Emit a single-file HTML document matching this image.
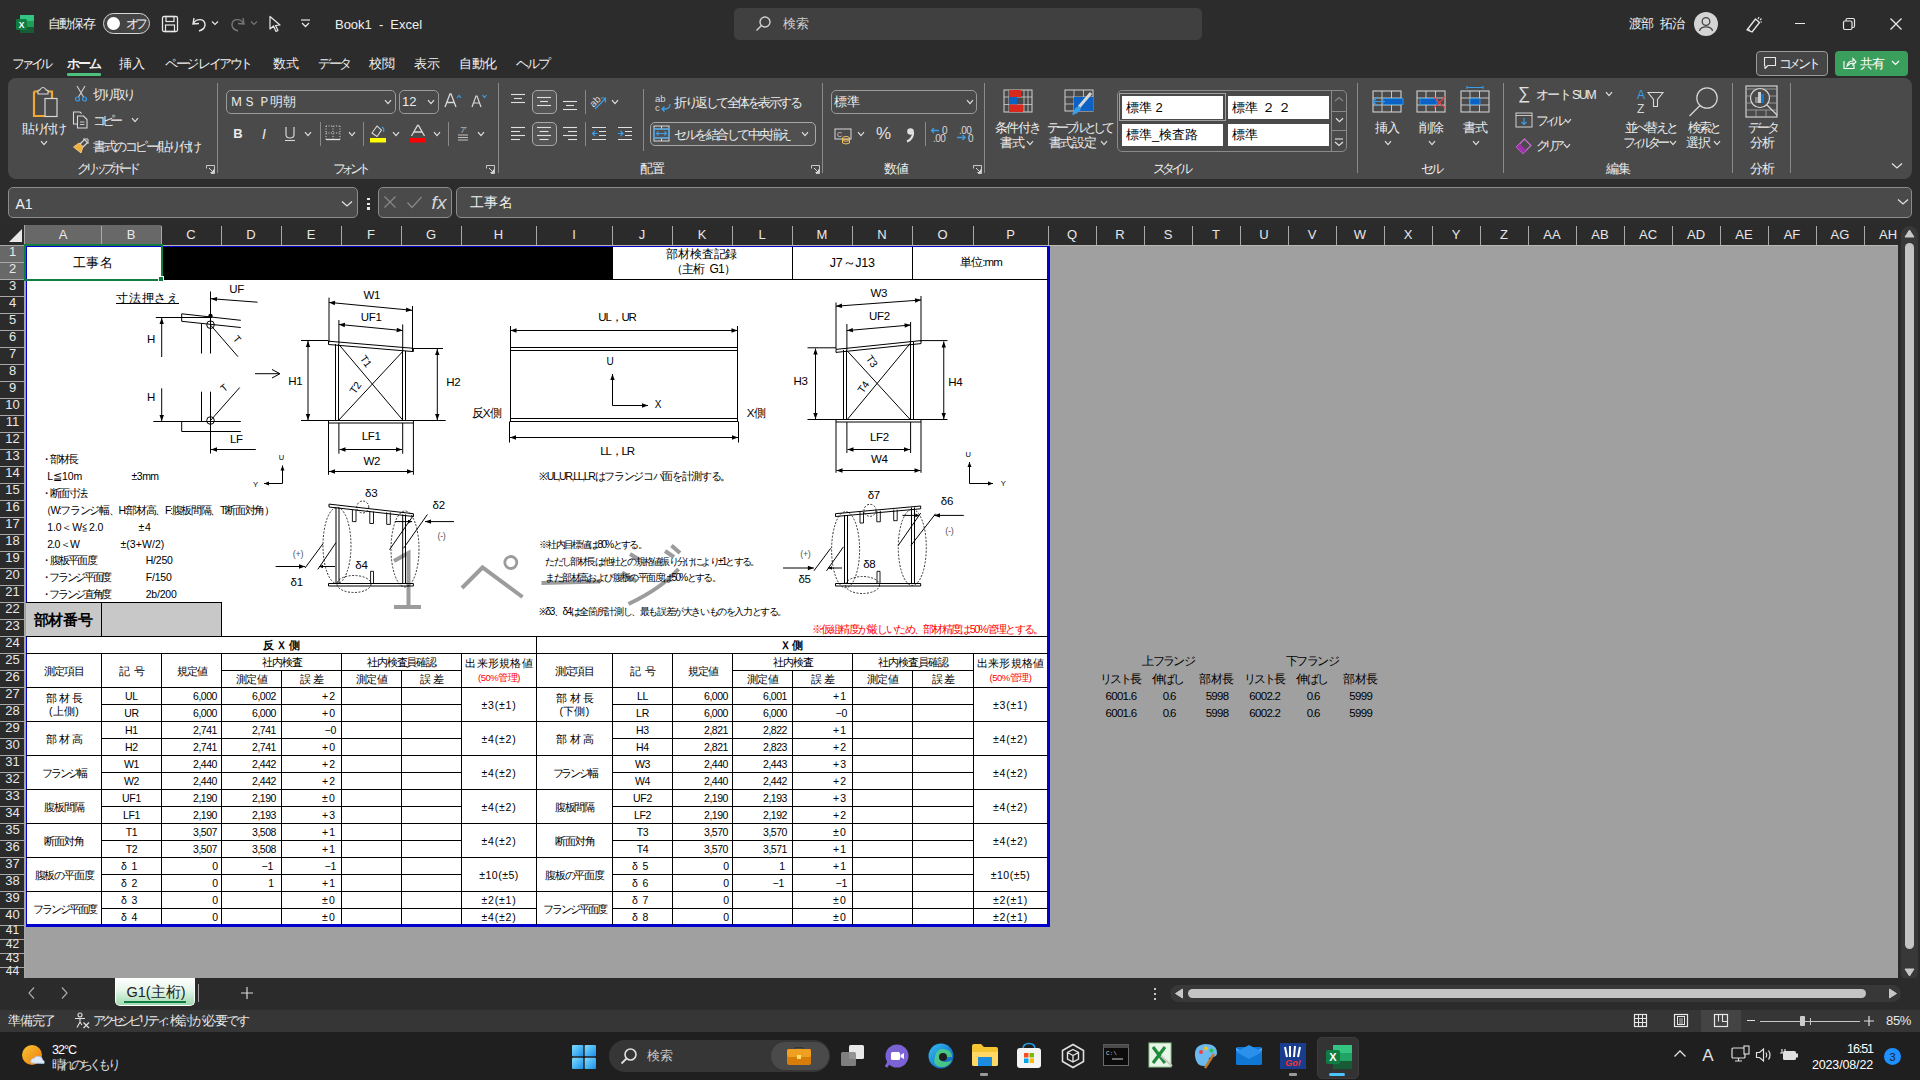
<!DOCTYPE html><html><head><meta charset="utf-8"><style>
html,body{margin:0;padding:0;width:1920px;height:1080px;overflow:hidden;background:#2c2c2c;font-family:"Liberation Sans",sans-serif;}
.t{position:absolute;white-space:nowrap;line-height:1.15;}
.r{position:absolute;box-sizing:border-box;}
.s{position:absolute;overflow:visible;}
</style></head><body>
<svg class="s" style="left:15px;top:14px;" width="20" height="20" viewBox="0 0 20 20"><rect x="5" y="1" width="14" height="18" rx="1.5" fill="#1f9d55"/><rect x="5" y="1" width="14" height="6" fill="#33c481"/><rect x="5" y="13" width="14" height="6" fill="#185c37"/><rect x="1" y="5" width="11" height="11" rx="1.5" fill="#107c41"/><text x="6.5" y="13.5" font-size="8.5" font-weight="bold" fill="#fff" text-anchor="middle" font-family="Liberation Sans">X</text></svg>
<div class="t" style="left:47.5px;top:24px;font-size:13px;color:#f0f0f0;transform:translate(0,-50%);letter-spacing:-1.125px;">自動保存</div>
<div class="r" style="left:103px;top:13px;width:47px;height:21px;background:#444444;border:1.5px solid #d8d8d8;border-radius:11px;"></div>
<div class="r" style="left:107px;top:17px;width:13px;height:13px;background:#fff;border-radius:50%;"></div>
<div class="t" style="left:126px;top:23.5px;font-size:12.5px;color:#f0f0f0;transform:translate(0,-50%);letter-spacing:-4.5px;">オフ</div>
<svg class="s" style="left:161px;top:15px;" width="18" height="18" viewBox="0 0 18 18"><rect x="1.5" y="1.5" width="15" height="15" rx="1.5" fill="none" stroke="#e8e8e8" stroke-width="1.3"/><rect x="5" y="1.5" width="8" height="5" fill="none" stroke="#e8e8e8" stroke-width="1.2"/><rect x="4.5" y="10" width="9" height="6.5" fill="none" stroke="#e8e8e8" stroke-width="1.2"/></svg>
<svg class="s" style="left:190px;top:15px;" width="18" height="18" viewBox="0 0 18 18"><path d="M4 3 L3 9 L9 8.5" fill="none" stroke="#e8e8e8" stroke-width="1.4"/><path d="M3.5 8.5 C6 3.5 14 3 15 9 C15.5 13 12 15 9 16" fill="none" stroke="#e8e8e8" stroke-width="1.4"/></svg>
<svg class="s" style="left:211px;top:20px;" width="8" height="6" viewBox="0 0 8 6"><path d="M1 1.5 L4 4.5 L7 1.5" fill="none" stroke="#e8e8e8" stroke-width="1.2"/></svg>
<svg class="s" style="left:229px;top:15px;" width="18" height="18" viewBox="0 0 18 18"><path d="M14 3 L15 9 L9 8.5" fill="none" stroke="#777" stroke-width="1.4"/><path d="M14.5 8.5 C12 3.5 4 3 3 9 C2.5 13 6 15 9 16" fill="none" stroke="#777" stroke-width="1.4"/></svg>
<svg class="s" style="left:250px;top:20px;" width="8" height="6" viewBox="0 0 8 6"><path d="M1 1.5 L4 4.5 L7 1.5" fill="none" stroke="#777" stroke-width="1.2"/></svg>
<svg class="s" style="left:268px;top:15px;" width="16" height="18" viewBox="0 0 16 18"><path d="M2 1.5 L2 14 L5.5 11 L8 16.5 L10 15.5 L7.5 10.5 L12 10 Z" fill="none" stroke="#e8e8e8" stroke-width="1.2" stroke-linejoin="round"/></svg>
<svg class="s" style="left:300px;top:19px;" width="11" height="9" viewBox="0 0 11 9"><path d="M1 1 L10 1" stroke="#e8e8e8" stroke-width="1.2"/><path d="M2 4 L5.5 7.5 L9 4" fill="none" stroke="#e8e8e8" stroke-width="1.3"/></svg>
<div class="t" style="left:335px;top:24.5px;font-size:13px;color:#f0f0f0;transform:translate(0,-50%);letter-spacing:-0.029px;">Book1&nbsp;&nbsp;-&nbsp;&nbsp;Excel</div>
<div class="r" style="left:734px;top:8px;width:468px;height:32px;background:#404040;border-radius:5px;"></div>
<svg class="s" style="left:754px;top:15px;" width="18" height="18" viewBox="0 0 18 18"><circle cx="11" cy="7" r="5" fill="none" stroke="#cfcfcf" stroke-width="1.4"/><path d="M7.5 10.5 L2.5 15.5" stroke="#cfcfcf" stroke-width="1.5"/></svg>
<div class="t" style="left:782.5px;top:24px;font-size:13px;color:#cfcfcf;transform:translate(0,-50%);letter-spacing:0.25px;">検索</div>
<div class="t" style="left:1628.5px;top:24px;font-size:13px;color:#f0f0f0;transform:translate(0,-50%);letter-spacing:-0.539px;">渡部&nbsp;&nbsp;拓治</div>
<div class="r" style="left:1694px;top:12px;width:24px;height:24px;background:#d4d4d4;border-radius:50%;"></div>
<svg class="s" style="left:1694px;top:12px;" width="24" height="24" viewBox="0 0 24 24"><circle cx="12" cy="9.5" r="3.8" fill="none" stroke="#444" stroke-width="1.3"/><path d="M5.5 19 C6.5 13.5 17.5 13.5 18.5 19" fill="none" stroke="#444" stroke-width="1.3"/></svg>
<svg class="s" style="left:1744px;top:15px;" width="20" height="18" viewBox="0 0 20 18"><path d="M3 15 L8 17 L15.5 7.5 L11.5 4 Z" fill="none" stroke="#e8e8e8" stroke-width="1.3" stroke-linejoin="round"/><path d="M4 13 L6 16" stroke="#e8e8e8" stroke-width="1.2"/><path d="M15 2 L14 4 M17.5 3.5 L16 5 M18 7 L16.5 7" stroke="#e8e8e8" stroke-width="1.1"/></svg>
<div class="r" style="left:1795px;top:23px;width:10px;height:1.2px;background:#e8e8e8;"></div>
<svg class="s" style="left:1842px;top:17px;" width="14" height="14" viewBox="0 0 14 14"><rect x="1.5" y="4" width="8.5" height="8.5" rx="1.5" fill="none" stroke="#e8e8e8" stroke-width="1.2"/><path d="M4 4 L4 3 Q4 1.5 5.5 1.5 L11 1.5 Q12.5 1.5 12.5 3 L12.5 9 Q12.5 10.5 11 10.5 L10 10.5" fill="none" stroke="#e8e8e8" stroke-width="1.2"/></svg>
<svg class="s" style="left:1889px;top:17px;" width="14" height="14" viewBox="0 0 14 14"><path d="M1.5 1.5 L12.5 12.5 M12.5 1.5 L1.5 12.5" stroke="#e8e8e8" stroke-width="1.3"/></svg>
<div class="t" style="left:12px;top:63.5px;font-size:13px;color:#f0f0f0;transform:translate(0,-50%);letter-spacing:-3.75px;">ファイル</div>
<div class="t" style="left:67px;top:63.5px;font-size:13px;color:#f0f0f0;transform:translate(0,-50%);font-weight:bold;letter-spacing:-2.0px;">ホーム</div>
<div class="t" style="left:119px;top:63.5px;font-size:13px;color:#f0f0f0;transform:translate(0,-50%);letter-spacing:0.0px;">挿入</div>
<div class="t" style="left:165px;top:63.5px;font-size:13px;color:#f0f0f0;transform:translate(0,-50%);letter-spacing:-2.403px;">ページ&nbsp;レイアウト</div>
<div class="t" style="left:273px;top:63.5px;font-size:13px;color:#f0f0f0;transform:translate(0,-50%);letter-spacing:0.0px;">数式</div>
<div class="t" style="left:318px;top:63.5px;font-size:13px;color:#f0f0f0;transform:translate(0,-50%);letter-spacing:-2.333px;">データ</div>
<div class="t" style="left:369px;top:63.5px;font-size:13px;color:#f0f0f0;transform:translate(0,-50%);letter-spacing:0.0px;">校閲</div>
<div class="t" style="left:414px;top:63.5px;font-size:13px;color:#f0f0f0;transform:translate(0,-50%);letter-spacing:0.0px;">表示</div>
<div class="t" style="left:459px;top:63.5px;font-size:13px;color:#f0f0f0;transform:translate(0,-50%);letter-spacing:-0.333px;">自動化</div>
<div class="t" style="left:516px;top:63.5px;font-size:13px;color:#f0f0f0;transform:translate(0,-50%);letter-spacing:-2.0px;">ヘルプ</div>
<div class="r" style="left:67px;top:73px;width:34px;height:2.5px;background:#4ec07e;border-radius:1px;"></div>
<div class="r" style="left:1756px;top:51px;width:72px;height:25px;background:#454545;border:1px solid #9a9a9a;border-radius:4px;"></div>
<svg class="s" style="left:1763px;top:56px;" width="14" height="14" viewBox="0 0 14 14"><path d="M1.5 1.5 L12.5 1.5 L12.5 9.5 L5 9.5 L2 12.5 L2 9.5 L1.5 9.5 Z" fill="none" stroke="#e8e8e8" stroke-width="1.1" stroke-linejoin="round"/></svg>
<div class="t" style="left:1778.5px;top:63.5px;font-size:13px;color:#f0f0f0;transform:translate(0,-50%);letter-spacing:-3.25px;">コメント</div>
<div class="r" style="left:1835px;top:51px;width:73px;height:25px;background:#3a9e5c;border-radius:4px;"></div>
<svg class="s" style="left:1842px;top:56px;" width="15" height="14" viewBox="0 0 15 14"><path d="M2 5 L2 12.5 L12 12.5 L12 9" fill="none" stroke="#fff" stroke-width="1.1"/><path d="M5 10 Q6 5 11 5 L11 2.5 L14 6 L11 9 L11 7 Q8 7 5 10Z" fill="none" stroke="#fff" stroke-width="1.1"/></svg>
<div class="t" style="left:1859.5px;top:63.5px;font-size:13px;color:#fff;transform:translate(0,-50%);letter-spacing:-0.75px;">共有</div>
<svg class="s" style="left:1891px;top:60px;" width="9" height="6" viewBox="0 0 9 6"><path d="M1 1 L4.5 4.5 L8 1" fill="none" stroke="#fff" stroke-width="1.2"/></svg>
<div class="r" style="left:8px;top:78px;width:1904px;height:101px;background:#4a4a4a;border-radius:8px;"></div>
<div class="t" style="left:106.5px;top:169px;font-size:13px;color:#ececec;transform:translate(-50%,-50%);letter-spacing:-4.571px;">クリップボード</div>
<div class="t" style="left:349.5px;top:169px;font-size:13px;color:#ececec;transform:translate(-50%,-50%);letter-spacing:-4.75px;">フォント</div>
<div class="t" style="left:652px;top:169px;font-size:13px;color:#ececec;transform:translate(-50%,-50%);letter-spacing:-1.0px;">配置</div>
<div class="t" style="left:896px;top:169px;font-size:13px;color:#ececec;transform:translate(-50%,-50%);letter-spacing:-1.0px;">数値</div>
<div class="t" style="left:1170.5px;top:169px;font-size:13px;color:#ececec;transform:translate(-50%,-50%);letter-spacing:-4.0px;">スタイル</div>
<div class="t" style="left:1431px;top:169px;font-size:13px;color:#ececec;transform:translate(-50%,-50%);letter-spacing:-3.0px;">セル</div>
<div class="t" style="left:1618px;top:169px;font-size:13px;color:#ececec;transform:translate(-50%,-50%);letter-spacing:-1.0px;">編集</div>
<div class="t" style="left:1762px;top:169px;font-size:13px;color:#ececec;transform:translate(-50%,-50%);letter-spacing:-1.0px;">分析</div>
<div class="r" style="left:217px;top:83px;width:1px;height:90px;background:#8a8a8a;"></div>
<div class="r" style="left:497.5px;top:83px;width:1px;height:90px;background:#8a8a8a;"></div>
<div class="r" style="left:822px;top:83px;width:1px;height:90px;background:#8a8a8a;"></div>
<div class="r" style="left:984px;top:83px;width:1px;height:90px;background:#8a8a8a;"></div>
<div class="r" style="left:1357px;top:83px;width:1px;height:90px;background:#8a8a8a;"></div>
<div class="r" style="left:1503px;top:83px;width:1px;height:90px;background:#8a8a8a;"></div>
<div class="r" style="left:1732px;top:83px;width:1px;height:90px;background:#8a8a8a;"></div>
<div class="r" style="left:1790px;top:83px;width:1px;height:90px;background:#8a8a8a;"></div>
<div class="r" style="left:643px;top:89px;width:1px;height:62px;background:#8a8a8a;"></div>
<svg class="s" style="left:206px;top:164.5px;" width="9" height="9" viewBox="0 0 9 9"><path d="M0.5 3.5 L0.5 0.5 L8.5 0.5 L8.5 8.5 L5 8.5" fill="none" stroke="#d8d8d8" stroke-width="0.9"/><path d="M3 3 L7.5 7.5 M7.5 4.5 L7.5 7.5 L4.5 7.5" fill="none" stroke="#d8d8d8" stroke-width="1"/></svg>
<svg class="s" style="left:486px;top:164.5px;" width="9" height="9" viewBox="0 0 9 9"><path d="M0.5 3.5 L0.5 0.5 L8.5 0.5 L8.5 8.5 L5 8.5" fill="none" stroke="#d8d8d8" stroke-width="0.9"/><path d="M3 3 L7.5 7.5 M7.5 4.5 L7.5 7.5 L4.5 7.5" fill="none" stroke="#d8d8d8" stroke-width="1"/></svg>
<svg class="s" style="left:811px;top:164.5px;" width="9" height="9" viewBox="0 0 9 9"><path d="M0.5 3.5 L0.5 0.5 L8.5 0.5 L8.5 8.5 L5 8.5" fill="none" stroke="#d8d8d8" stroke-width="0.9"/><path d="M3 3 L7.5 7.5 M7.5 4.5 L7.5 7.5 L4.5 7.5" fill="none" stroke="#d8d8d8" stroke-width="1"/></svg>
<svg class="s" style="left:973px;top:164.5px;" width="9" height="9" viewBox="0 0 9 9"><path d="M0.5 3.5 L0.5 0.5 L8.5 0.5 L8.5 8.5 L5 8.5" fill="none" stroke="#d8d8d8" stroke-width="0.9"/><path d="M3 3 L7.5 7.5 M7.5 4.5 L7.5 7.5 L4.5 7.5" fill="none" stroke="#d8d8d8" stroke-width="1"/></svg>
<svg class="s" style="left:1891px;top:162px;" width="12" height="8" viewBox="0 0 12 8"><path d="M1 1.5 L6 6 L11 1.5" fill="none" stroke="#e0e0e0" stroke-width="1.3"/></svg>
<svg class="s" style="left:30px;top:86px;" width="32" height="32" viewBox="0 0 32 32"><path d="M4 5.5 L4 30 L15 30" fill="none" stroke="#f0a830" stroke-width="2.2"/><path d="M4 5.5 L8 5.5 M18 5.5 L22 5.5 L22 12" fill="none" stroke="#f0a830" stroke-width="2.2"/><path d="M8 8 L8 4.5 Q10 4.5 10.5 3 Q13 0 15.5 3 Q16 4.5 18 4.5 L18 8 Z" fill="#4a4a4a" stroke="#d8d8d8" stroke-width="1.1"/><rect x="15" y="12.5" width="12" height="18" fill="#4a4a4a" stroke="#d8d8d8" stroke-width="1.2"/></svg>
<div class="t" style="left:43px;top:128.5px;font-size:12.5px;color:#ececec;transform:translate(-50%,-50%);letter-spacing:-2.5px;">貼り付け</div>
<svg class="s" style="left:40.0px;top:140px;" width="8" height="6" viewBox="0 0 8 6"><path d="M1 1.2 L4.0 4.6 L7 1.2" fill="none" stroke="#e0e0e0" stroke-width="1.2"/></svg>
<svg class="s" style="left:74px;top:85px;" width="14" height="17" viewBox="0 0 14 17"><path d="M3 1 L9.5 12 M11 1 L4.5 12" stroke="#d0d0d0" stroke-width="1.1"/><circle cx="3.5" cy="14" r="2" fill="none" stroke="#3a9ee8" stroke-width="1.2"/><circle cx="10.5" cy="14" r="2" fill="none" stroke="#3a9ee8" stroke-width="1.2"/></svg>
<div class="t" style="left:93px;top:94.5px;font-size:12.5px;color:#ececec;transform:translate(0,-50%);letter-spacing:-3.0px;">切り取り</div>
<svg class="s" style="left:72px;top:111px;" width="18" height="18" viewBox="0 0 18 18"><path d="M5 13 L1.5 13 L1.5 1 L8 1 L9.5 2.5" fill="none" stroke="#d8d8d8" stroke-width="1.1"/><path d="M5.5 5 L11.5 5 L15 8.5 L15 17 L5.5 17 Z" fill="none" stroke="#d8d8d8" stroke-width="1.1"/><path d="M8 11 L12.5 11 M8 13.5 L12.5 13.5" stroke="#d8d8d8" stroke-width="0.9"/></svg>
<div class="t" style="left:93px;top:120.5px;font-size:12.5px;color:#ececec;transform:translate(0,-50%);letter-spacing:-4.333px;">コピー</div>
<svg class="s" style="left:131.0px;top:117px;" width="8" height="6" viewBox="0 0 8 6"><path d="M1 1.2 L4.0 4.6 L7 1.2" fill="none" stroke="#e0e0e0" stroke-width="1.2"/></svg>
<svg class="s" style="left:72px;top:137px;" width="18" height="17" viewBox="0 0 18 17"><path d="M1.5 10 L9 16 L11 9.5 L7 6 Z" fill="#f0b040" stroke="#f8d890" stroke-width="0.8"/><path d="M8 7 L12.5 2.5 L15.5 5.5 L11 10" fill="none" stroke="#d8d8d8" stroke-width="1.2"/><path d="M11 2 L16 2 L16 7" fill="none" stroke="#d8d8d8" stroke-width="1"/></svg>
<div class="t" style="left:93px;top:146.5px;font-size:12.5px;color:#ececec;transform:translate(0,-50%);letter-spacing:-2.408px;">書式のコピー/貼り付け</div>
<div class="r" style="left:226px;top:90px;width:170px;height:24px;background:none;border:1px solid #9a9a9a;border-radius:5px;"></div>
<div class="t" style="left:230px;top:101.5px;font-size:12.5px;color:#ececec;transform:translate(0,-50%);letter-spacing:-0.5px;">ＭＳ&nbsp;Ｐ明朝</div>
<svg class="s" style="left:384.0px;top:99px;" width="8" height="6" viewBox="0 0 8 6"><path d="M1 1.2 L4.0 4.6 L7 1.2" fill="none" stroke="#e0e0e0" stroke-width="1.2"/></svg>
<div class="r" style="left:399px;top:90px;width:40px;height:24px;background:none;border:1px solid #9a9a9a;border-radius:5px;"></div>
<div class="t" style="left:402px;top:102px;font-size:13px;color:#ececec;transform:translate(0,-50%);">12</div>
<svg class="s" style="left:427.0px;top:99px;" width="8" height="6" viewBox="0 0 8 6"><path d="M1 1.2 L4.0 4.6 L7 1.2" fill="none" stroke="#e0e0e0" stroke-width="1.2"/></svg>
<svg class="s" style="left:444px;top:92px;" width="18" height="16" viewBox="0 0 18 16"><path d="M1 15 L6 2 L7 2 L12 15 M3 10.5 L10 10.5" fill="none" stroke="#d8d8d8" stroke-width="1.3"/><path d="M13 6 L15 3.5 L17 6" fill="none" stroke="#3a9ee8" stroke-width="1.2"/></svg>
<svg class="s" style="left:471px;top:93px;" width="17" height="15" viewBox="0 0 17 15"><path d="M1 14 L5 3 L6 3 L10 14 M2.8 10 L8.2 10" fill="none" stroke="#d8d8d8" stroke-width="1.2"/><path d="M11.5 2 L13.5 4.5 L15.5 2" fill="none" stroke="#3a9ee8" stroke-width="1.2"/></svg>
<div class="t" style="left:238px;top:133.5px;font-size:13px;color:#ececec;transform:translate(-50%,-50%);font-weight:bold;">B</div>
<div class="t" style="left:264px;top:133.5px;font-size:14px;color:#ececec;transform:translate(-50%,-50%);font-family:"Liberation Serif",serif;"><i>I</i></div>
<svg class="s" style="left:284px;top:126px;" width="12" height="16" viewBox="0 0 12 16"><path d="M2 1 L2 8.5 Q2 12 6 12 Q10 12 10 8.5 L10 1" fill="none" stroke="#d8d8d8" stroke-width="1.2"/><path d="M1 14.5 L11 14.5" stroke="#d8d8d8" stroke-width="1.1"/></svg>
<svg class="s" style="left:304.0px;top:131px;" width="8" height="6" viewBox="0 0 8 6"><path d="M1 1.2 L4.0 4.6 L7 1.2" fill="none" stroke="#e0e0e0" stroke-width="1.2"/></svg>
<div class="r" style="left:319.5px;top:122px;width:1px;height:24px;background:#8a8a8a;"></div>
<svg class="s" style="left:325px;top:125px;" width="16" height="16" viewBox="0 0 16 16"><path d="M1 1 L15 1 M1 1 L1 15 M15 1 L15 15 M8 1 L8 15 M1 8 L15 8" fill="none" stroke="#d0d0d0" stroke-width="1" stroke-dasharray="1 1.5"/><path d="M1 14.5 L15 14.5" stroke="#e0e0e0" stroke-width="1.3"/></svg>
<svg class="s" style="left:348.0px;top:131px;" width="8" height="6" viewBox="0 0 8 6"><path d="M1 1.2 L4.0 4.6 L7 1.2" fill="none" stroke="#e0e0e0" stroke-width="1.2"/></svg>
<div class="r" style="left:363px;top:122px;width:1px;height:24px;background:#8a8a8a;"></div>
<svg class="s" style="left:368px;top:124px;" width="20" height="19" viewBox="0 0 20 19"><path d="M4 9 L9 2 L13.5 6 L9 12.5 Z" fill="none" stroke="#d8d8d8" stroke-width="1.1"/><path d="M14 3 Q16.5 4.5 15.5 8" fill="none" stroke="#3a9ee8" stroke-width="1.3"/><rect x="2" y="14" width="16" height="4.5" fill="#ffff00"/></svg>
<svg class="s" style="left:392.0px;top:131px;" width="8" height="6" viewBox="0 0 8 6"><path d="M1 1.2 L4.0 4.6 L7 1.2" fill="none" stroke="#e0e0e0" stroke-width="1.2"/></svg>
<svg class="s" style="left:409px;top:124px;" width="18" height="19" viewBox="0 0 18 19"><path d="M2.5 12 L8.5 1.5 L9.5 1.5 L15.5 12 M5 8 L13 8" fill="none" stroke="#d8d8d8" stroke-width="1.3"/><rect x="1" y="14" width="16" height="4.5" fill="#ff0000"/></svg>
<svg class="s" style="left:433.0px;top:131px;" width="8" height="6" viewBox="0 0 8 6"><path d="M1 1.2 L4.0 4.6 L7 1.2" fill="none" stroke="#e0e0e0" stroke-width="1.2"/></svg>
<div class="r" style="left:448px;top:122px;width:1px;height:24px;background:#8a8a8a;"></div>
<svg class="s" style="left:456px;top:125px;" width="14" height="16" viewBox="0 0 14 16"><text x="7" y="7" font-size="7" fill="#d8d8d8" text-anchor="middle" font-family="Liberation Sans">ア</text><path d="M2 10 L12 10 M2 12.5 L12 12.5 M2 15 L12 15" stroke="#c0c0c0" stroke-width="1"/></svg>
<svg class="s" style="left:477.0px;top:131px;" width="8" height="6" viewBox="0 0 8 6"><path d="M1 1.2 L4.0 4.6 L7 1.2" fill="none" stroke="#e0e0e0" stroke-width="1.2"/></svg>
<svg class="s" style="left:511px;top:93px;" width="16" height="18" viewBox="0 0 16 18"><path d="M0 1.5 L14 1.5" stroke="#e0e0e0" stroke-width="1.1"/><path d="M3 5.5 L11 5.5" stroke="#e0e0e0" stroke-width="1.1"/><path d="M0 9.5 L14 9.5" stroke="#e0e0e0" stroke-width="1.1"/></svg>
<div class="r" style="left:532px;top:90px;width:25px;height:24px;background:#555;border:1px solid #a8a8a8;border-radius:5px;"></div>
<svg class="s" style="left:537px;top:96px;" width="16" height="18" viewBox="0 0 16 18"><path d="M0 1.5 L14 1.5" stroke="#e0e0e0" stroke-width="1.1"/><path d="M3 5.5 L11 5.5" stroke="#e0e0e0" stroke-width="1.1"/><path d="M0 9.5 L14 9.5" stroke="#e0e0e0" stroke-width="1.1"/></svg>
<svg class="s" style="left:563px;top:100px;" width="16" height="18" viewBox="0 0 16 18"><path d="M0 1.5 L14 1.5" stroke="#e0e0e0" stroke-width="1.1"/><path d="M3 5.5 L11 5.5" stroke="#e0e0e0" stroke-width="1.1"/><path d="M0 9.5 L14 9.5" stroke="#e0e0e0" stroke-width="1.1"/></svg>
<div class="r" style="left:584.5px;top:90px;width:1px;height:24px;background:#8a8a8a;"></div>
<svg class="s" style="left:589px;top:92px;" width="20" height="18" viewBox="0 0 20 18"><text x="1" y="13" font-size="10" fill="#d8d8d8" transform="rotate(-45 6 10)" font-family="Liberation Sans">ab</text><path d="M6 17 L16.5 6.5 M12 6 L16.5 6 L16.5 10.5" fill="none" stroke="#3a9ee8" stroke-width="1.2"/></svg>
<svg class="s" style="left:611.0px;top:99px;" width="8" height="6" viewBox="0 0 8 6"><path d="M1 1.2 L4.0 4.6 L7 1.2" fill="none" stroke="#e0e0e0" stroke-width="1.2"/></svg>
<svg class="s" style="left:511px;top:126px;" width="16" height="18" viewBox="0 0 16 18"><path d="M0 1.5 L14 1.5" stroke="#e0e0e0" stroke-width="1.1"/><path d="M0 5.5 L9 5.5" stroke="#e0e0e0" stroke-width="1.1"/><path d="M0 9.5 L14 9.5" stroke="#e0e0e0" stroke-width="1.1"/><path d="M0 13.5 L9 13.5" stroke="#e0e0e0" stroke-width="1.1"/></svg>
<div class="r" style="left:532px;top:122px;width:25px;height:24px;background:#555;border:1px solid #a8a8a8;border-radius:5px;"></div>
<svg class="s" style="left:537px;top:126px;" width="16" height="18" viewBox="0 0 16 18"><path d="M0 1.5 L14 1.5" stroke="#e0e0e0" stroke-width="1.1"/><path d="M2.5 5.5 L11.5 5.5" stroke="#e0e0e0" stroke-width="1.1"/><path d="M0 9.5 L14 9.5" stroke="#e0e0e0" stroke-width="1.1"/><path d="M2.5 13.5 L11.5 13.5" stroke="#e0e0e0" stroke-width="1.1"/></svg>
<svg class="s" style="left:563px;top:126px;" width="16" height="18" viewBox="0 0 16 18"><path d="M0 1.5 L14 1.5" stroke="#e0e0e0" stroke-width="1.1"/><path d="M5 5.5 L14 5.5" stroke="#e0e0e0" stroke-width="1.1"/><path d="M0 9.5 L14 9.5" stroke="#e0e0e0" stroke-width="1.1"/><path d="M5 13.5 L14 13.5" stroke="#e0e0e0" stroke-width="1.1"/></svg>
<div class="r" style="left:584.5px;top:122px;width:1px;height:24px;background:#8a8a8a;"></div>
<svg class="s" style="left:591px;top:126px;" width="16" height="16" viewBox="0 0 16 16"><path d="M1 1.5 L15 1.5 M8 5.5 L15 5.5 M8 9.5 L15 9.5 M1 13.5 L15 13.5" stroke="#e0e0e0" stroke-width="1"/><path d="M1.5 7.5 L6.5 7.5 M4 5 L1.5 7.5 L4 10" fill="none" stroke="#3a9ee8" stroke-width="1.2"/></svg>
<svg class="s" style="left:617px;top:126px;" width="16" height="16" viewBox="0 0 16 16"><path d="M1 1.5 L15 1.5 M8 5.5 L15 5.5 M8 9.5 L15 9.5 M1 13.5 L15 13.5" stroke="#e0e0e0" stroke-width="1"/><path d="M1 7.5 L6 7.5 M3.5 5 L6 7.5 L3.5 10" fill="none" stroke="#3a9ee8" stroke-width="1.2"/></svg>
<svg class="s" style="left:655px;top:94px;" width="17" height="19" viewBox="0 0 17 19"><text x="0" y="8" font-size="9.5" fill="#d8d8d8" font-family="Liberation Sans">ab</text><text x="0" y="17" font-size="9.5" fill="#d8d8d8" font-family="Liberation Sans">c</text><path d="M15 10 Q15 15 10 15 L7 15 M9.5 12.5 L7 15 L9.5 17.5" fill="none" stroke="#3a9ee8" stroke-width="1.3"/></svg>
<div class="t" style="left:674px;top:102.5px;font-size:12.5px;color:#ececec;transform:translate(0,-50%);letter-spacing:-2.5px;">折り返して全体を表示する</div>
<div class="r" style="left:650px;top:122px;width:166px;height:24px;background:#505050;border:1px solid #a8a8a8;border-radius:5px;"></div>
<svg class="s" style="left:653px;top:125px;" width="17" height="17" viewBox="0 0 17 17"><rect x="1" y="1" width="15" height="15" fill="none" stroke="#d8d8d8" stroke-width="1"/><path d="M8.5 1 L8.5 4 M8.5 13 L8.5 16 M1 4 L16 4 M1 13 L16 13" stroke="#d8d8d8" stroke-width="1"/><rect x="1" y="4" width="15" height="9" fill="none" stroke="#3a9ee8" stroke-width="1.2"/><path d="M3.5 8.5 L13.5 8.5 M5.5 6.5 L3.5 8.5 L5.5 10.5 M11.5 6.5 L13.5 8.5 L11.5 10.5" fill="none" stroke="#3a9ee8" stroke-width="1.1"/></svg>
<div class="t" style="left:674px;top:134.5px;font-size:12.5px;color:#ececec;transform:translate(0,-50%);letter-spacing:-2.455px;">セルを結合して中央揃え</div>
<svg class="s" style="left:801.0px;top:131px;" width="8" height="6" viewBox="0 0 8 6"><path d="M1 1.2 L4.0 4.6 L7 1.2" fill="none" stroke="#e0e0e0" stroke-width="1.2"/></svg>
<div class="r" style="left:831px;top:90px;width:146px;height:24px;background:none;border:1px solid #9a9a9a;border-radius:5px;"></div>
<div class="t" style="left:834px;top:101.5px;font-size:12.5px;color:#ececec;transform:translate(0,-50%);">標準</div>
<svg class="s" style="left:966.0px;top:99px;" width="8" height="6" viewBox="0 0 8 6"><path d="M1 1.2 L4.0 4.6 L7 1.2" fill="none" stroke="#e0e0e0" stroke-width="1.2"/></svg>
<svg class="s" style="left:834px;top:128px;" width="19" height="17" viewBox="0 0 19 17"><rect x="1" y="1" width="16" height="10" fill="none" stroke="#d8d8d8" stroke-width="1"/><text x="3" y="9" font-size="7" fill="#d8d8d8" font-family="Liberation Sans">C</text><ellipse cx="12" cy="10" rx="3.5" ry="1.5" fill="none" stroke="#f0c060" stroke-width="1"/><path d="M8.5 10 L8.5 15 Q12 17 15.5 15 L15.5 10 M8.5 12.5 Q12 14 15.5 12.5" fill="none" stroke="#f0c060" stroke-width="1"/></svg>
<svg class="s" style="left:857.0px;top:131px;" width="8" height="6" viewBox="0 0 8 6"><path d="M1 1.2 L4.0 4.6 L7 1.2" fill="none" stroke="#e0e0e0" stroke-width="1.2"/></svg>
<div class="t" style="left:883.5px;top:134px;font-size:17px;color:#e0e0e0;transform:translate(-50%,-50%);">%</div>
<svg class="s" style="left:903px;top:126px;" width="14" height="17" viewBox="0 0 14 17"><circle cx="7.5" cy="5.5" r="3.3" fill="#e0e0e0"/><path d="M10 6 Q10.5 12.5 4 15.5" fill="none" stroke="#e0e0e0" stroke-width="2.2"/></svg>
<div class="r" style="left:924.5px;top:122px;width:1px;height:24px;background:#8a8a8a;"></div>
<svg class="s" style="left:930px;top:124px;" width="19" height="19" viewBox="0 0 19 19"><path d="M1.5 6.5 L9 6.5 M4 4 L1.5 6.5 L4 9" fill="none" stroke="#3a9ee8" stroke-width="1.3"/><text x="12" y="9.5" font-size="10" fill="#d8d8d8" font-family="Liberation Sans">0</text><text x="3" y="18" font-size="10" fill="#d8d8d8" font-family="Liberation Sans" letter-spacing="-0.5">.00</text></svg>
<svg class="s" style="left:956px;top:124px;" width="19" height="19" viewBox="0 0 19 19"><text x="3" y="9.5" font-size="10" fill="#d8d8d8" font-family="Liberation Sans" letter-spacing="-0.5">.00</text><path d="M1 13.5 L9 13.5 M6.5 11 L9 13.5 L6.5 16" fill="none" stroke="#3a9ee8" stroke-width="1.3"/><text x="12" y="18" font-size="10" fill="#d8d8d8" font-family="Liberation Sans">0</text></svg>
<svg class="s" style="left:1003px;top:89px;" width="30" height="25" viewBox="0 0 30 25"><rect x="1" y="1" width="28" height="22" fill="none" stroke="#d0d0d0" stroke-width="1"/><path d="M6 1 L6 23 M21 1 L21 23 M25 1 L25 23 M1 8 L29 8 M1 15.5 L29 15.5" stroke="#d0d0d0" stroke-width="0.8"/><rect x="6" y="1" width="12" height="7" fill="#d9281e"/><rect x="6" y="8" width="8" height="7.5" fill="#0b62c4"/><rect x="6" y="15.5" width="14" height="7.5" fill="#d9281e"/></svg>
<div class="t" style="left:1017.5px;top:128px;font-size:12.5px;color:#ececec;transform:translate(-50%,-50%);letter-spacing:-1.75px;">条件付き</div>
<div class="t" style="left:1012px;top:143px;font-size:12.5px;color:#ececec;transform:translate(-50%,-50%);letter-spacing:-1.0px;">書式</div>
<svg class="s" style="left:1026.0px;top:140px;" width="8" height="6" viewBox="0 0 8 6"><path d="M1 1.2 L4.0 4.6 L7 1.2" fill="none" stroke="#e0e0e0" stroke-width="1.2"/></svg>
<svg class="s" style="left:1064px;top:89px;" width="32" height="28" viewBox="0 0 32 28"><rect x="1" y="1" width="28" height="21" fill="none" stroke="#d0d0d0" stroke-width="1"/><path d="M10 1 L10 22 M19.5 1 L19.5 22 M1 8 L29 8 M1 15 L29 15" stroke="#d0d0d0" stroke-width="0.8"/><rect x="10" y="8" width="19.5" height="14" fill="#0b62c4"/><path d="M27 4 L15 18" stroke="#d8d8d8" stroke-width="3"/><path d="M15 17 Q10 19 8 26 Q14 25 17 20 Z" fill="#3a9ee8"/></svg>
<div class="t" style="left:1079px;top:128px;font-size:12.5px;color:#ececec;transform:translate(-50%,-50%);letter-spacing:-3.857px;">テーブルとして</div>
<div class="t" style="left:1072px;top:143px;font-size:12.5px;color:#ececec;transform:translate(-50%,-50%);letter-spacing:-1.25px;">書式設定</div>
<svg class="s" style="left:1100.0px;top:140px;" width="8" height="6" viewBox="0 0 8 6"><path d="M1 1.2 L4.0 4.6 L7 1.2" fill="none" stroke="#e0e0e0" stroke-width="1.2"/></svg>
<div class="r" style="left:1117px;top:90px;width:230px;height:62px;background:none;border:1px solid #8a8a8a;border-radius:5px;"></div>
<div class="r" style="left:1119px;top:93px;width:107px;height:28px;background:none;border:1px solid #a0a0a0;"></div>
<div class="r" style="left:1122px;top:96px;width:101px;height:23px;background:#fff;"></div>
<div class="r" style="left:1228px;top:96px;width:101px;height:23px;background:#fff;"></div>
<div class="r" style="left:1122px;top:124px;width:101px;height:22px;background:#fff;"></div>
<div class="r" style="left:1228px;top:124px;width:101px;height:22px;background:#fff;"></div>
<div class="t" style="left:1126px;top:107.5px;font-size:13px;color:#000;transform:translate(0,-50%);letter-spacing:0px;font-family:"Liberation Mono",monospace;">標準&nbsp;2</div>
<div class="t" style="left:1232px;top:107.5px;font-size:13px;color:#000;transform:translate(0,-50%);">標準&nbsp;２&nbsp;２</div>
<div class="t" style="left:1126px;top:135px;font-size:13px;color:#000;transform:translate(0,-50%);">標準_検査路</div>
<div class="t" style="left:1232px;top:135px;font-size:13px;color:#000;transform:translate(0,-50%);">標準</div>
<div class="r" style="left:1331px;top:90px;width:1px;height:62px;background:#8a8a8a;"></div>
<div class="r" style="left:1331px;top:111px;width:16px;height:1px;background:#8a8a8a;"></div>
<div class="r" style="left:1331px;top:130px;width:16px;height:1px;background:#8a8a8a;"></div>
<svg class="s" style="left:1334px;top:96px;" width="10" height="6" viewBox="0 0 10 6"><path d="M1 5 L5 1.5 L9 5" fill="none" stroke="#888" stroke-width="1.1"/></svg>
<svg class="s" style="left:1334.5px;top:117px;" width="9" height="6" viewBox="0 0 9 6"><path d="M1 1.2 L4.5 4.6 L8 1.2" fill="none" stroke="#e0e0e0" stroke-width="1.2"/></svg>
<svg class="s" style="left:1334px;top:138px;" width="10" height="9" viewBox="0 0 10 9"><path d="M1 1 L9 1" stroke="#e0e0e0" stroke-width="1.1"/><path d="M1 4 L5 7.5 L9 4" fill="none" stroke="#e0e0e0" stroke-width="1.2"/></svg>
<svg class="s" style="left:1372px;top:86px;" width="31" height="28" viewBox="0 0 31 28"><rect x="1" y="5" width="28" height="21" fill="none" stroke="#d0d0d0" stroke-width="1.1"/><path d="M10 5 L10 26 M19.5 5 L19.5 26 M1 12 L29 12 M1 19 L29 19" stroke="#d0d0d0" stroke-width="0.9"/><rect x="11" y="12.5" width="20" height="6" fill="#0b62c4" stroke="#3a9ee8" stroke-width="0.8"/><path d="M13 15.5 L1 15.5 M5.5 11 L1 15.5 L5.5 20" fill="none" stroke="#3a9ee8" stroke-width="1.2"/></svg>
<svg class="s" style="left:1416px;top:86px;" width="31" height="28" viewBox="0 0 31 28"><rect x="1" y="5" width="28" height="21" fill="none" stroke="#d0d0d0" stroke-width="1.1"/><path d="M10 5 L10 26 M19.5 5 L19.5 26 M1 12 L29 12 M1 19 L29 19" stroke="#d0d0d0" stroke-width="0.9"/><rect x="4" y="12.5" width="17" height="6" fill="#0b62c4" stroke="#3a9ee8" stroke-width="0.8"/><path d="M18 11 L29 22 M29 11 L18 22" stroke="#e04040" stroke-width="1.2"/></svg>
<svg class="s" style="left:1460px;top:86px;" width="31" height="28" viewBox="0 0 31 28"><rect x="1" y="5" width="28" height="21" fill="none" stroke="#d0d0d0" stroke-width="1.1"/><path d="M10 5 L10 26 M19.5 5 L19.5 26 M1 12 L29 12 M1 19 L29 19" stroke="#d0d0d0" stroke-width="0.9"/><rect x="10" y="12.5" width="10" height="6" fill="#0b62c4" stroke="#3a9ee8" stroke-width="0.8"/><path d="M7 1.5 L23 1.5 M7 0 L7 3 M23 0 L23 3" stroke="#3a9ee8" stroke-width="1.1"/></svg>
<div class="t" style="left:1387px;top:128px;font-size:12.5px;color:#ececec;transform:translate(-50%,-50%);letter-spacing:-1.0px;">挿入</div>
<svg class="s" style="left:1384.0px;top:140px;" width="8" height="6" viewBox="0 0 8 6"><path d="M1 1.2 L4.0 4.6 L7 1.2" fill="none" stroke="#e0e0e0" stroke-width="1.2"/></svg>
<div class="t" style="left:1431px;top:128px;font-size:12.5px;color:#ececec;transform:translate(-50%,-50%);letter-spacing:-1.0px;">削除</div>
<svg class="s" style="left:1428.0px;top:140px;" width="8" height="6" viewBox="0 0 8 6"><path d="M1 1.2 L4.0 4.6 L7 1.2" fill="none" stroke="#e0e0e0" stroke-width="1.2"/></svg>
<div class="t" style="left:1475px;top:128px;font-size:12.5px;color:#ececec;transform:translate(-50%,-50%);letter-spacing:-1.0px;">書式</div>
<svg class="s" style="left:1472.0px;top:140px;" width="8" height="6" viewBox="0 0 8 6"><path d="M1 1.2 L4.0 4.6 L7 1.2" fill="none" stroke="#e0e0e0" stroke-width="1.2"/></svg>
<div class="t" style="left:1524px;top:94px;font-size:17px;color:#e0e0e0;transform:translate(-50%,-50%);font-family:"Liberation Serif",serif;">∑</div>
<div class="t" style="left:1536px;top:94.5px;font-size:12.5px;color:#ececec;transform:translate(0,-50%);letter-spacing:-1.607px;">オート&nbsp;SUM</div>
<svg class="s" style="left:1605.0px;top:91px;" width="8" height="6" viewBox="0 0 8 6"><path d="M1 1.2 L4.0 4.6 L7 1.2" fill="none" stroke="#e0e0e0" stroke-width="1.2"/></svg>
<svg class="s" style="left:1515px;top:112px;" width="18" height="16" viewBox="0 0 18 16"><rect x="1" y="1" width="16" height="14" fill="none" stroke="#d0d0d0" stroke-width="1"/><path d="M1 3.5 L17 3.5" stroke="#d0d0d0" stroke-width="0.9"/><path d="M9 6 L9 12.5 M6.5 10 L9 12.5 L11.5 10" fill="none" stroke="#3a9ee8" stroke-width="1.2"/></svg>
<div class="t" style="left:1536px;top:121px;font-size:12.5px;color:#ececec;transform:translate(0,-50%);letter-spacing:-4.667px;">フィル</div>
<svg class="s" style="left:1564.0px;top:118px;" width="8" height="6" viewBox="0 0 8 6"><path d="M1 1.2 L4.0 4.6 L7 1.2" fill="none" stroke="#e0e0e0" stroke-width="1.2"/></svg>
<svg class="s" style="left:1515px;top:137px;" width="18" height="17" viewBox="0 0 18 17"><path d="M1.5 10 L9.5 2 L16 8.5 L8 16.5 Z" fill="none" stroke="#d070d8" stroke-width="1.1"/><path d="M1.5 10 L4.8 6.7 L11.3 13.2 L8 16.5 Z" fill="#a030b0"/></svg>
<div class="t" style="left:1536px;top:146px;font-size:12.5px;color:#ececec;transform:translate(0,-50%);letter-spacing:-5.0px;">クリア</div>
<svg class="s" style="left:1563.0px;top:143px;" width="8" height="6" viewBox="0 0 8 6"><path d="M1 1.2 L4.0 4.6 L7 1.2" fill="none" stroke="#e0e0e0" stroke-width="1.2"/></svg>
<svg class="s" style="left:1636px;top:87px;" width="30" height="28" viewBox="0 0 30 28"><text x="1" y="12" font-size="12" fill="#3a9ee8" font-family="Liberation Sans">A</text><text x="1" y="26" font-size="12" fill="#d8d8d8" font-family="Liberation Sans">Z</text><path d="M12 5.5 L27 5.5 L21.5 12.5 L21.5 19.5 L17.5 19.5 L17.5 12.5 Z" fill="none" stroke="#d8d8d8" stroke-width="1.1"/></svg>
<div class="t" style="left:1650.5px;top:128px;font-size:12.5px;color:#ececec;transform:translate(-50%,-50%);letter-spacing:-2.8px;">並べ替えと</div>
<div class="t" style="left:1644px;top:143px;font-size:12.5px;color:#ececec;transform:translate(-50%,-50%);letter-spacing:-4.6px;">フィルター</div>
<svg class="s" style="left:1669.0px;top:140px;" width="8" height="6" viewBox="0 0 8 6"><path d="M1 1.2 L4.0 4.6 L7 1.2" fill="none" stroke="#e0e0e0" stroke-width="1.2"/></svg>
<svg class="s" style="left:1688px;top:86px;" width="32" height="32" viewBox="0 0 32 32"><circle cx="19" cy="12" r="10.2" fill="none" stroke="#d8d8d8" stroke-width="1.2"/><path d="M12 19.5 L1.5 30" stroke="#d8d8d8" stroke-width="1.2"/></svg>
<div class="t" style="left:1704px;top:128px;font-size:12.5px;color:#ececec;transform:translate(-50%,-50%);letter-spacing:-2.333px;">検索と</div>
<div class="t" style="left:1698px;top:143px;font-size:12.5px;color:#ececec;transform:translate(-50%,-50%);letter-spacing:-1.0px;">選択</div>
<svg class="s" style="left:1713.0px;top:140px;" width="8" height="6" viewBox="0 0 8 6"><path d="M1 1.2 L4.0 4.6 L7 1.2" fill="none" stroke="#e0e0e0" stroke-width="1.2"/></svg>
<svg class="s" style="left:1745px;top:85px;" width="34" height="34" viewBox="0 0 34 34"><rect x="1" y="1" width="31" height="31" fill="none" stroke="#d0d0d0" stroke-width="1.2"/><path d="M1 4 L32 4 M1 11 L32 11 M1 18 L32 18 M1 25 L32 25 M11 25 L11 32 M21 25 L21 32" stroke="#aaa" stroke-width="0.8"/><circle cx="15" cy="13" r="9.5" fill="#4a4a4a" stroke="#d8d8d8" stroke-width="1.2"/><rect x="10" y="12" width="3" height="6" fill="#888"/><rect x="13" y="7" width="3" height="11" fill="#ccc"/><rect x="16" y="9" width="3" height="9" fill="#0b78d8"/><path d="M22 20 L32 30" stroke="#d8d8d8" stroke-width="1.2"/></svg>
<div class="t" style="left:1762px;top:128px;font-size:12.5px;color:#ececec;transform:translate(-50%,-50%);letter-spacing:-3.667px;">データ</div>
<div class="t" style="left:1762px;top:143px;font-size:12.5px;color:#ececec;transform:translate(-50%,-50%);letter-spacing:-1.0px;">分析</div>
<div class="r" style="left:8px;top:187px;width:350px;height:31px;background:#4a4a4a;border:1px solid #8c8c8c;border-radius:5px;"></div>
<div class="t" style="left:15.5px;top:203.5px;font-size:14px;color:#f0f0f0;transform:translate(0,-50%);letter-spacing:-0.062px;">A1</div>
<svg class="s" style="left:341px;top:200px;" width="12" height="8" viewBox="0 0 12 8"><path d="M1 1.5 L6 6 L11 1.5" fill="none" stroke="#e0e0e0" stroke-width="1.3"/></svg>
<div class="r" style="left:367px;top:197.5px;width:2.5px;height:2.5px;background:#e8e8e8;"></div>
<div class="r" style="left:367px;top:202.5px;width:2.5px;height:2.5px;background:#e8e8e8;"></div>
<div class="r" style="left:367px;top:207px;width:2.5px;height:2.5px;background:#e8e8e8;"></div>
<div class="r" style="left:378px;top:187px;width:74px;height:31px;background:#4a4a4a;border:1px solid #8c8c8c;border-radius:5px;"></div>
<svg class="s" style="left:383px;top:195px;" width="14" height="14" viewBox="0 0 14 14"><path d="M1.5 1.5 L12.5 12.5 M12.5 1.5 L1.5 12.5" stroke="#888" stroke-width="1.2"/></svg>
<svg class="s" style="left:406px;top:195px;" width="17" height="14" viewBox="0 0 17 14"><path d="M1.5 7.5 L6 12.5 L15.5 2" fill="none" stroke="#888" stroke-width="1.2"/></svg>
<div class="t" style="left:439px;top:203px;font-size:19px;color:#d8d8d8;transform:translate(-50%,-50%);font-family:"Liberation Serif",serif;"><i>fx</i></div>
<div class="r" style="left:456px;top:187px;width:1456px;height:31px;background:#4a4a4a;border:1px solid #8c8c8c;border-radius:5px;"></div>
<div class="t" style="left:470px;top:202px;font-size:14px;color:#f0f0f0;transform:translate(0,-50%);letter-spacing:0.333px;">工事名</div>
<svg class="s" style="left:1897px;top:198px;" width="12" height="8" viewBox="0 0 12 8"><path d="M1 1.5 L6 6 L11 1.5" fill="none" stroke="#e0e0e0" stroke-width="1.3"/></svg>
<div class="r" style="left:0px;top:225px;width:1899px;height:20px;background:#2b2b2b;"></div>
<div class="r" style="left:25px;top:225px;width:136px;height:20px;background:#686868;"></div>
<div class="t" style="left:63.0px;top:235px;font-size:13px;color:#e8e8e8;transform:translate(-50%,-50%);">A</div>
<div class="t" style="left:131.0px;top:235px;font-size:13px;color:#e8e8e8;transform:translate(-50%,-50%);">B</div>
<div class="t" style="left:191.0px;top:235px;font-size:13px;color:#e8e8e8;transform:translate(-50%,-50%);">C</div>
<div class="t" style="left:251.0px;top:235px;font-size:13px;color:#e8e8e8;transform:translate(-50%,-50%);">D</div>
<div class="t" style="left:311.0px;top:235px;font-size:13px;color:#e8e8e8;transform:translate(-50%,-50%);">E</div>
<div class="t" style="left:371.0px;top:235px;font-size:13px;color:#e8e8e8;transform:translate(-50%,-50%);">F</div>
<div class="t" style="left:431.0px;top:235px;font-size:13px;color:#e8e8e8;transform:translate(-50%,-50%);">G</div>
<div class="t" style="left:498.5px;top:235px;font-size:13px;color:#e8e8e8;transform:translate(-50%,-50%);">H</div>
<div class="t" style="left:574.0px;top:235px;font-size:13px;color:#e8e8e8;transform:translate(-50%,-50%);">I</div>
<div class="t" style="left:642.0px;top:235px;font-size:13px;color:#e8e8e8;transform:translate(-50%,-50%);">J</div>
<div class="t" style="left:702.0px;top:235px;font-size:13px;color:#e8e8e8;transform:translate(-50%,-50%);">K</div>
<div class="t" style="left:762.0px;top:235px;font-size:13px;color:#e8e8e8;transform:translate(-50%,-50%);">L</div>
<div class="t" style="left:822.0px;top:235px;font-size:13px;color:#e8e8e8;transform:translate(-50%,-50%);">M</div>
<div class="t" style="left:882.0px;top:235px;font-size:13px;color:#e8e8e8;transform:translate(-50%,-50%);">N</div>
<div class="t" style="left:942.5px;top:235px;font-size:13px;color:#e8e8e8;transform:translate(-50%,-50%);">O</div>
<div class="t" style="left:1010.5px;top:235px;font-size:13px;color:#e8e8e8;transform:translate(-50%,-50%);">P</div>
<div class="t" style="left:1072.0px;top:235px;font-size:13px;color:#e8e8e8;transform:translate(-50%,-50%);">Q</div>
<div class="t" style="left:1120.0px;top:235px;font-size:13px;color:#e8e8e8;transform:translate(-50%,-50%);">R</div>
<div class="t" style="left:1168.0px;top:235px;font-size:13px;color:#e8e8e8;transform:translate(-50%,-50%);">S</div>
<div class="t" style="left:1216.0px;top:235px;font-size:13px;color:#e8e8e8;transform:translate(-50%,-50%);">T</div>
<div class="t" style="left:1264.0px;top:235px;font-size:13px;color:#e8e8e8;transform:translate(-50%,-50%);">U</div>
<div class="t" style="left:1312.0px;top:235px;font-size:13px;color:#e8e8e8;transform:translate(-50%,-50%);">V</div>
<div class="t" style="left:1360.0px;top:235px;font-size:13px;color:#e8e8e8;transform:translate(-50%,-50%);">W</div>
<div class="t" style="left:1408.0px;top:235px;font-size:13px;color:#e8e8e8;transform:translate(-50%,-50%);">X</div>
<div class="t" style="left:1456.0px;top:235px;font-size:13px;color:#e8e8e8;transform:translate(-50%,-50%);">Y</div>
<div class="t" style="left:1504.0px;top:235px;font-size:13px;color:#e8e8e8;transform:translate(-50%,-50%);">Z</div>
<div class="t" style="left:1552.0px;top:235px;font-size:13px;color:#e8e8e8;transform:translate(-50%,-50%);">AA</div>
<div class="t" style="left:1600.0px;top:235px;font-size:13px;color:#e8e8e8;transform:translate(-50%,-50%);">AB</div>
<div class="t" style="left:1648.0px;top:235px;font-size:13px;color:#e8e8e8;transform:translate(-50%,-50%);">AC</div>
<div class="t" style="left:1696.0px;top:235px;font-size:13px;color:#e8e8e8;transform:translate(-50%,-50%);">AD</div>
<div class="t" style="left:1744.0px;top:235px;font-size:13px;color:#e8e8e8;transform:translate(-50%,-50%);">AE</div>
<div class="t" style="left:1792.0px;top:235px;font-size:13px;color:#e8e8e8;transform:translate(-50%,-50%);">AF</div>
<div class="t" style="left:1840.0px;top:235px;font-size:13px;color:#e8e8e8;transform:translate(-50%,-50%);">AG</div>
<div class="t" style="left:1888.0px;top:235px;font-size:13px;color:#e8e8e8;transform:translate(-50%,-50%);">AH</div>
<div class="r" style="left:101px;top:226px;width:1px;height:19px;background:#a8a8a8;"></div>
<div class="r" style="left:161px;top:226px;width:1px;height:19px;background:#a8a8a8;"></div>
<div class="r" style="left:221px;top:226px;width:1px;height:19px;background:#a8a8a8;"></div>
<div class="r" style="left:281px;top:226px;width:1px;height:19px;background:#a8a8a8;"></div>
<div class="r" style="left:341px;top:226px;width:1px;height:19px;background:#a8a8a8;"></div>
<div class="r" style="left:401px;top:226px;width:1px;height:19px;background:#a8a8a8;"></div>
<div class="r" style="left:461px;top:226px;width:1px;height:19px;background:#a8a8a8;"></div>
<div class="r" style="left:536px;top:226px;width:1px;height:19px;background:#a8a8a8;"></div>
<div class="r" style="left:612px;top:226px;width:1px;height:19px;background:#a8a8a8;"></div>
<div class="r" style="left:672px;top:226px;width:1px;height:19px;background:#a8a8a8;"></div>
<div class="r" style="left:732px;top:226px;width:1px;height:19px;background:#a8a8a8;"></div>
<div class="r" style="left:792px;top:226px;width:1px;height:19px;background:#a8a8a8;"></div>
<div class="r" style="left:852px;top:226px;width:1px;height:19px;background:#a8a8a8;"></div>
<div class="r" style="left:912px;top:226px;width:1px;height:19px;background:#a8a8a8;"></div>
<div class="r" style="left:973px;top:226px;width:1px;height:19px;background:#a8a8a8;"></div>
<div class="r" style="left:1048px;top:226px;width:1px;height:19px;background:#a8a8a8;"></div>
<div class="r" style="left:1096px;top:226px;width:1px;height:19px;background:#a8a8a8;"></div>
<div class="r" style="left:1144px;top:226px;width:1px;height:19px;background:#a8a8a8;"></div>
<div class="r" style="left:1192px;top:226px;width:1px;height:19px;background:#a8a8a8;"></div>
<div class="r" style="left:1240px;top:226px;width:1px;height:19px;background:#a8a8a8;"></div>
<div class="r" style="left:1288px;top:226px;width:1px;height:19px;background:#a8a8a8;"></div>
<div class="r" style="left:1336px;top:226px;width:1px;height:19px;background:#a8a8a8;"></div>
<div class="r" style="left:1384px;top:226px;width:1px;height:19px;background:#a8a8a8;"></div>
<div class="r" style="left:1432px;top:226px;width:1px;height:19px;background:#a8a8a8;"></div>
<div class="r" style="left:1480px;top:226px;width:1px;height:19px;background:#a8a8a8;"></div>
<div class="r" style="left:1528px;top:226px;width:1px;height:19px;background:#a8a8a8;"></div>
<div class="r" style="left:1576px;top:226px;width:1px;height:19px;background:#a8a8a8;"></div>
<div class="r" style="left:1624px;top:226px;width:1px;height:19px;background:#a8a8a8;"></div>
<div class="r" style="left:1672px;top:226px;width:1px;height:19px;background:#a8a8a8;"></div>
<div class="r" style="left:1720px;top:226px;width:1px;height:19px;background:#a8a8a8;"></div>
<div class="r" style="left:1768px;top:226px;width:1px;height:19px;background:#a8a8a8;"></div>
<div class="r" style="left:1816px;top:226px;width:1px;height:19px;background:#a8a8a8;"></div>
<div class="r" style="left:1864px;top:226px;width:1px;height:19px;background:#a8a8a8;"></div>
<div class="r" style="left:24px;top:225px;width:1px;height:20px;background:#a8a8a8;"></div>
<svg class="s" style="left:8px;top:228px;" width="16" height="16" viewBox="0 0 16 16"><path d="M14 1 L14 14 L1 14 Z" fill="#e8e8e8"/></svg>
<div class="r" style="left:0px;top:245px;width:25px;height:733px;background:#2b2b2b;"></div>
<div class="r" style="left:0px;top:245px;width:24px;height:34px;background:#686868;"></div>
<div class="r" style="left:0px;top:245px;width:24px;height:1px;background:#a8a8a8;"></div>
<div class="t" style="left:12.5px;top:252.0px;font-size:13px;color:#e8e8e8;transform:translate(-50%,-50%);">1</div>
<div class="r" style="left:0px;top:262px;width:24px;height:1px;background:#a8a8a8;"></div>
<div class="t" style="left:12.5px;top:269.0px;font-size:13px;color:#e8e8e8;transform:translate(-50%,-50%);">2</div>
<div class="r" style="left:0px;top:279px;width:24px;height:1px;background:#a8a8a8;"></div>
<div class="t" style="left:12.5px;top:286.0px;font-size:13px;color:#e8e8e8;transform:translate(-50%,-50%);">3</div>
<div class="r" style="left:0px;top:296px;width:24px;height:1px;background:#a8a8a8;"></div>
<div class="t" style="left:12.5px;top:303.0px;font-size:13px;color:#e8e8e8;transform:translate(-50%,-50%);">4</div>
<div class="r" style="left:0px;top:313px;width:24px;height:1px;background:#a8a8a8;"></div>
<div class="t" style="left:12.5px;top:320.0px;font-size:13px;color:#e8e8e8;transform:translate(-50%,-50%);">5</div>
<div class="r" style="left:0px;top:330px;width:24px;height:1px;background:#a8a8a8;"></div>
<div class="t" style="left:12.5px;top:337.0px;font-size:13px;color:#e8e8e8;transform:translate(-50%,-50%);">6</div>
<div class="r" style="left:0px;top:347px;width:24px;height:1px;background:#a8a8a8;"></div>
<div class="t" style="left:12.5px;top:354.0px;font-size:13px;color:#e8e8e8;transform:translate(-50%,-50%);">7</div>
<div class="r" style="left:0px;top:364px;width:24px;height:1px;background:#a8a8a8;"></div>
<div class="t" style="left:12.5px;top:371.0px;font-size:13px;color:#e8e8e8;transform:translate(-50%,-50%);">8</div>
<div class="r" style="left:0px;top:381px;width:24px;height:1px;background:#a8a8a8;"></div>
<div class="t" style="left:12.5px;top:388.0px;font-size:13px;color:#e8e8e8;transform:translate(-50%,-50%);">9</div>
<div class="r" style="left:0px;top:398px;width:24px;height:1px;background:#a8a8a8;"></div>
<div class="t" style="left:12.5px;top:405.0px;font-size:13px;color:#e8e8e8;transform:translate(-50%,-50%);">10</div>
<div class="r" style="left:0px;top:415px;width:24px;height:1px;background:#a8a8a8;"></div>
<div class="t" style="left:12.5px;top:422.0px;font-size:13px;color:#e8e8e8;transform:translate(-50%,-50%);">11</div>
<div class="r" style="left:0px;top:432px;width:24px;height:1px;background:#a8a8a8;"></div>
<div class="t" style="left:12.5px;top:439.0px;font-size:13px;color:#e8e8e8;transform:translate(-50%,-50%);">12</div>
<div class="r" style="left:0px;top:449px;width:24px;height:1px;background:#a8a8a8;"></div>
<div class="t" style="left:12.5px;top:456.0px;font-size:13px;color:#e8e8e8;transform:translate(-50%,-50%);">13</div>
<div class="r" style="left:0px;top:466px;width:24px;height:1px;background:#a8a8a8;"></div>
<div class="t" style="left:12.5px;top:473.0px;font-size:13px;color:#e8e8e8;transform:translate(-50%,-50%);">14</div>
<div class="r" style="left:0px;top:483px;width:24px;height:1px;background:#a8a8a8;"></div>
<div class="t" style="left:12.5px;top:490.0px;font-size:13px;color:#e8e8e8;transform:translate(-50%,-50%);">15</div>
<div class="r" style="left:0px;top:500px;width:24px;height:1px;background:#a8a8a8;"></div>
<div class="t" style="left:12.5px;top:507.0px;font-size:13px;color:#e8e8e8;transform:translate(-50%,-50%);">16</div>
<div class="r" style="left:0px;top:517px;width:24px;height:1px;background:#a8a8a8;"></div>
<div class="t" style="left:12.5px;top:524.0px;font-size:13px;color:#e8e8e8;transform:translate(-50%,-50%);">17</div>
<div class="r" style="left:0px;top:534px;width:24px;height:1px;background:#a8a8a8;"></div>
<div class="t" style="left:12.5px;top:541.0px;font-size:13px;color:#e8e8e8;transform:translate(-50%,-50%);">18</div>
<div class="r" style="left:0px;top:551px;width:24px;height:1px;background:#a8a8a8;"></div>
<div class="t" style="left:12.5px;top:558.0px;font-size:13px;color:#e8e8e8;transform:translate(-50%,-50%);">19</div>
<div class="r" style="left:0px;top:568px;width:24px;height:1px;background:#a8a8a8;"></div>
<div class="t" style="left:12.5px;top:575.0px;font-size:13px;color:#e8e8e8;transform:translate(-50%,-50%);">20</div>
<div class="r" style="left:0px;top:585px;width:24px;height:1px;background:#a8a8a8;"></div>
<div class="t" style="left:12.5px;top:592.0px;font-size:13px;color:#e8e8e8;transform:translate(-50%,-50%);">21</div>
<div class="r" style="left:0px;top:602px;width:24px;height:1px;background:#a8a8a8;"></div>
<div class="t" style="left:12.5px;top:609.0px;font-size:13px;color:#e8e8e8;transform:translate(-50%,-50%);">22</div>
<div class="r" style="left:0px;top:619px;width:24px;height:1px;background:#a8a8a8;"></div>
<div class="t" style="left:12.5px;top:626.0px;font-size:13px;color:#e8e8e8;transform:translate(-50%,-50%);">23</div>
<div class="r" style="left:0px;top:636px;width:24px;height:1px;background:#a8a8a8;"></div>
<div class="t" style="left:12.5px;top:643.0px;font-size:13px;color:#e8e8e8;transform:translate(-50%,-50%);">24</div>
<div class="r" style="left:0px;top:653px;width:24px;height:1px;background:#a8a8a8;"></div>
<div class="t" style="left:12.5px;top:660.0px;font-size:13px;color:#e8e8e8;transform:translate(-50%,-50%);">25</div>
<div class="r" style="left:0px;top:670px;width:24px;height:1px;background:#a8a8a8;"></div>
<div class="t" style="left:12.5px;top:677.0px;font-size:13px;color:#e8e8e8;transform:translate(-50%,-50%);">26</div>
<div class="r" style="left:0px;top:687px;width:24px;height:1px;background:#a8a8a8;"></div>
<div class="t" style="left:12.5px;top:694.0px;font-size:13px;color:#e8e8e8;transform:translate(-50%,-50%);">27</div>
<div class="r" style="left:0px;top:704px;width:24px;height:1px;background:#a8a8a8;"></div>
<div class="t" style="left:12.5px;top:711.0px;font-size:13px;color:#e8e8e8;transform:translate(-50%,-50%);">28</div>
<div class="r" style="left:0px;top:721px;width:24px;height:1px;background:#a8a8a8;"></div>
<div class="t" style="left:12.5px;top:728.0px;font-size:13px;color:#e8e8e8;transform:translate(-50%,-50%);">29</div>
<div class="r" style="left:0px;top:738px;width:24px;height:1px;background:#a8a8a8;"></div>
<div class="t" style="left:12.5px;top:745.0px;font-size:13px;color:#e8e8e8;transform:translate(-50%,-50%);">30</div>
<div class="r" style="left:0px;top:755px;width:24px;height:1px;background:#a8a8a8;"></div>
<div class="t" style="left:12.5px;top:762.0px;font-size:13px;color:#e8e8e8;transform:translate(-50%,-50%);">31</div>
<div class="r" style="left:0px;top:772px;width:24px;height:1px;background:#a8a8a8;"></div>
<div class="t" style="left:12.5px;top:779.0px;font-size:13px;color:#e8e8e8;transform:translate(-50%,-50%);">32</div>
<div class="r" style="left:0px;top:789px;width:24px;height:1px;background:#a8a8a8;"></div>
<div class="t" style="left:12.5px;top:796.0px;font-size:13px;color:#e8e8e8;transform:translate(-50%,-50%);">33</div>
<div class="r" style="left:0px;top:806px;width:24px;height:1px;background:#a8a8a8;"></div>
<div class="t" style="left:12.5px;top:813.0px;font-size:13px;color:#e8e8e8;transform:translate(-50%,-50%);">34</div>
<div class="r" style="left:0px;top:823px;width:24px;height:1px;background:#a8a8a8;"></div>
<div class="t" style="left:12.5px;top:830.0px;font-size:13px;color:#e8e8e8;transform:translate(-50%,-50%);">35</div>
<div class="r" style="left:0px;top:840px;width:24px;height:1px;background:#a8a8a8;"></div>
<div class="t" style="left:12.5px;top:847.0px;font-size:13px;color:#e8e8e8;transform:translate(-50%,-50%);">36</div>
<div class="r" style="left:0px;top:857px;width:24px;height:1px;background:#a8a8a8;"></div>
<div class="t" style="left:12.5px;top:864.0px;font-size:13px;color:#e8e8e8;transform:translate(-50%,-50%);">37</div>
<div class="r" style="left:0px;top:874px;width:24px;height:1px;background:#a8a8a8;"></div>
<div class="t" style="left:12.5px;top:881.0px;font-size:13px;color:#e8e8e8;transform:translate(-50%,-50%);">38</div>
<div class="r" style="left:0px;top:891px;width:24px;height:1px;background:#a8a8a8;"></div>
<div class="t" style="left:12.5px;top:898.0px;font-size:13px;color:#e8e8e8;transform:translate(-50%,-50%);">39</div>
<div class="r" style="left:0px;top:908px;width:24px;height:1px;background:#a8a8a8;"></div>
<div class="t" style="left:12.5px;top:915.0px;font-size:13px;color:#e8e8e8;transform:translate(-50%,-50%);">40</div>
<div class="r" style="left:0px;top:925px;width:24px;height:1px;background:#a8a8a8;"></div>
<div class="t" style="left:12.5px;top:931.0px;font-size:12px;color:#e8e8e8;transform:translate(-50%,-50%);">41</div>
<div class="r" style="left:0px;top:939px;width:24px;height:1px;background:#a8a8a8;"></div>
<div class="t" style="left:12.5px;top:945.0px;font-size:12px;color:#e8e8e8;transform:translate(-50%,-50%);">42</div>
<div class="r" style="left:0px;top:953px;width:24px;height:1px;background:#a8a8a8;"></div>
<div class="t" style="left:12.5px;top:959.0px;font-size:12px;color:#e8e8e8;transform:translate(-50%,-50%);">43</div>
<div class="r" style="left:0px;top:967px;width:24px;height:1px;background:#a8a8a8;"></div>
<div class="t" style="left:12.5px;top:971.5px;font-size:12px;color:#e8e8e8;transform:translate(-50%,-50%);">44</div>
<div class="r" style="left:24px;top:245px;width:1px;height:733px;background:#a8a8a8;"></div>
<div class="r" style="left:25px;top:245px;width:1873px;height:733px;background:#a0a0a0;"></div>
<div class="r" style="left:25px;top:245px;width:1873px;height:1px;background:#b8b8b0;"></div>
<div class="r" style="left:26px;top:246px;width:1024px;height:681px;background:#ffffff;"></div>
<div class="r" style="left:26px;top:246px;width:1023px;height:1px;background:#0000cc;"></div>
<div class="r" style="left:26px;top:246px;width:1px;height:680px;background:#0000cc;"></div>
<div class="r" style="left:1047px;top:246px;width:3px;height:681px;background:#0000cc;"></div>
<div class="r" style="left:26px;top:924px;width:1024px;height:3px;background:#0000cc;"></div>
<div class="r" style="left:1899px;top:225px;width:21px;height:753px;background:#2b2b2b;"></div>
<div class="r" style="left:1901px;top:226px;width:17px;height:755px;background:#383838;border-radius:8.5px;"></div>
<svg class="s" style="left:1904px;top:229px;" width="11" height="9" viewBox="0 0 11 9"><path d="M1 8 L5.5 1 L10 8 Z" fill="#c8c8c8" stroke="#c8c8c8" stroke-width="1" stroke-linejoin="round"/></svg>
<div class="r" style="left:1905px;top:243px;width:9px;height:706px;background:#c4c4c4;border-radius:4.5px;"></div>
<svg class="s" style="left:1904px;top:968px;" width="11" height="9" viewBox="0 0 11 9"><path d="M1 1 L5.5 8 L10 1 Z" fill="#c8c8c8" stroke="#c8c8c8" stroke-width="1" stroke-linejoin="round"/></svg>
<div class="r" style="left:0px;top:978px;width:1920px;height:31px;background:#2b2b2b;"></div>
<svg class="s" style="left:26px;top:986px;" width="12" height="14" viewBox="0 0 12 14"><path d="M8 1.5 L3 7 L8 12.5" fill="none" stroke="#a8a8a8" stroke-width="1.2"/></svg>
<svg class="s" style="left:58px;top:986px;" width="12" height="14" viewBox="0 0 12 14"><path d="M4 1.5 L9 7 L4 12.5" fill="none" stroke="#a8a8a8" stroke-width="1.2"/></svg>
<div class="r" style="left:115px;top:978px;width:80px;height:28px;background:linear-gradient(#ffffff 0%, #e6f5ea 45%, #9fdcb2 100%);border-radius:0 0 5px 5px;border:1px solid #ffffff;border-top:none;"></div>
<div class="t" style="left:156px;top:991.5px;font-size:14.5px;color:#222;transform:translate(-50%,-50%);letter-spacing:0.0px;">G1(主桁)</div>
<div class="r" style="left:124px;top:1001px;width:62px;height:2px;background:#107c41;"></div>
<div class="r" style="left:198px;top:984px;width:1px;height:18px;background:#a0a0a0;"></div>
<svg class="s" style="left:240px;top:986px;" width="14" height="14" viewBox="0 0 14 14"><path d="M7 1 L7 13 M1 7 L13 7" stroke="#d8d8d8" stroke-width="1.2"/></svg>
<div class="r" style="left:1154px;top:988px;width:2px;height:2px;background:#c8c8c8;"></div>
<div class="r" style="left:1154px;top:993px;width:2px;height:2px;background:#c8c8c8;"></div>
<div class="r" style="left:1154px;top:998px;width:2px;height:2px;background:#c8c8c8;"></div>
<div class="r" style="left:1170px;top:985px;width:731px;height:17px;background:#383838;border-radius:8.5px;"></div>
<svg class="s" style="left:1174px;top:988px;" width="10" height="11" viewBox="0 0 10 11"><path d="M8.5 1 L1.5 5.5 L8.5 10 Z" fill="#c8c8c8" stroke="#c8c8c8" stroke-width="1" stroke-linejoin="round"/></svg>
<div class="r" style="left:1188px;top:989px;width:678px;height:9px;background:#c4c4c4;border-radius:4.5px;"></div>
<svg class="s" style="left:1888px;top:988px;" width="10" height="11" viewBox="0 0 10 11"><path d="M1.5 1 L8.5 5.5 L1.5 10 Z" fill="#c8c8c8" stroke="#c8c8c8" stroke-width="1" stroke-linejoin="round"/></svg>
<div class="r" style="left:0px;top:1010px;width:1920px;height:22px;background:#363636;"></div>
<div class="t" style="left:8px;top:1020.5px;font-size:12.5px;color:#e8e8e8;transform:translate(0,-50%);letter-spacing:-1.25px;">準備完了</div>
<svg class="s" style="left:74px;top:1012px;" width="16" height="17" viewBox="0 0 16 17"><circle cx="6" cy="3" r="2" fill="none" stroke="#e0e0e0" stroke-width="1.1"/><path d="M1 6.5 L11 6.5 M6 6.5 L6 10 L3 15.5 M6 10 L8 13" fill="none" stroke="#e0e0e0" stroke-width="1.1"/><path d="M9.5 10.5 L15 16 M15 10.5 L9.5 16" stroke="#e0e0e0" stroke-width="1.2"/></svg>
<div class="t" style="left:93px;top:1020.5px;font-size:12.5px;color:#e8e8e8;transform:translate(0,-50%);letter-spacing:-3.943px;">アクセシビリティ:</div>
<div class="t" style="left:170px;top:1020.5px;font-size:12.5px;color:#e8e8e8;transform:translate(0,-50%);letter-spacing:-1.857px;">検討が必要です</div>
<svg class="s" style="left:1633px;top:1013px;" width="16" height="16" viewBox="0 0 16 16"><rect x="1.5" y="1.5" width="12" height="12" fill="none" stroke="#e8e8e8" stroke-width="1.2"/><path d="M5.5 1.5 L5.5 13.5 M9.5 1.5 L9.5 13.5 M1.5 5.5 L13.5 5.5 M1.5 9.5 L13.5 9.5" stroke="#e8e8e8" stroke-width="1"/></svg>
<div class="r" style="left:1701px;top:1010px;width:40px;height:22px;background:#444444;"></div>
<svg class="s" style="left:1673px;top:1013px;" width="16" height="16" viewBox="0 0 16 16"><rect x="1.5" y="1.5" width="13" height="12" fill="none" stroke="#e8e8e8" stroke-width="1.2"/><rect x="4.5" y="3.5" width="7" height="8" fill="none" stroke="#e8e8e8" stroke-width="1"/><path d="M6 6 L10 6 M6 8 L10 8 M6 10 L10 10" stroke="#e8e8e8" stroke-width="0.8"/></svg>
<svg class="s" style="left:1713px;top:1013px;" width="16" height="16" viewBox="0 0 16 16"><rect x="1.5" y="1.5" width="13" height="12" fill="none" stroke="#e8e8e8" stroke-width="1.2"/><path d="M5.5 1.5 L5.5 8.5 M9.5 1.5 L9.5 8.5 L14.5 8.5" fill="none" stroke="#e8e8e8" stroke-width="1.1"/></svg>
<div class="r" style="left:1747px;top:1020px;width:8px;height:1.3px;background:#e0e0e0;"></div>
<div class="r" style="left:1760px;top:1021px;width:100px;height:1px;background:#c8c8c8;"></div>
<div class="r" style="left:1800px;top:1016px;width:5px;height:10px;background:#cccccc;border-radius:1px;"></div>
<div class="r" style="left:1810px;top:1018px;width:1px;height:7px;background:#c8c8c8;"></div>
<svg class="s" style="left:1863px;top:1015px;" width="12" height="12" viewBox="0 0 12 12"><path d="M6 1 L6 11 M1 6 L11 6" stroke="#e0e0e0" stroke-width="1.2"/></svg>
<div class="t" style="left:1898.5px;top:1020.5px;font-size:13px;color:#e8e8e8;transform:translate(-50%,-50%);letter-spacing:-0.344px;">85%</div>
<div class="r" style="left:0px;top:1032px;width:1920px;height:48px;background:#1f1f1f;"></div>
<svg class="s" style="left:20px;top:1044px;" width="26" height="24" viewBox="0 0 26 24"><defs><linearGradient id="sun" x1="0" y1="0" x2="1" y2="1"><stop offset="0" stop-color="#f7c531"/><stop offset="1" stop-color="#f07a10"/></linearGradient></defs><circle cx="12" cy="11" r="10" fill="url(#sun)"/><path d="M11 19 Q10 14.5 14 14.5 Q15.5 11.5 19 12.5 Q22.5 12.5 22.5 16 Q25 16.5 24 19.5 Z" fill="#dfe9f7" stroke="#a9c4ea" stroke-width="0.8"/></svg>
<div class="t" style="left:52px;top:1049.5px;font-size:12.5px;color:#fff;transform:translate(0,-50%);letter-spacing:-0.984px;">32°C</div>
<div class="t" style="left:52px;top:1065px;font-size:12.5px;color:#d8d8d8;transform:translate(0,-50%);letter-spacing:-3.714px;">晴れのちくもり</div>
<svg class="s" style="left:572px;top:1045px;" width="24" height="24" viewBox="0 0 24 24"><defs><linearGradient id="win" x1="0" y1="0" x2="1" y2="1"><stop offset="0" stop-color="#7fdcff"/><stop offset="1" stop-color="#1a8fe8"/></linearGradient></defs><rect x="0" y="0" width="11.3" height="11.3" rx="1" fill="url(#win)"/><rect x="12.7" y="0" width="11.3" height="11.3" rx="1" fill="url(#win)"/><rect x="0" y="12.7" width="11.3" height="11.3" rx="1" fill="url(#win)"/><rect x="12.7" y="12.7" width="11.3" height="11.3" rx="1" fill="url(#win)"/></svg>
<div class="r" style="left:609px;top:1040px;width:221px;height:32px;background:#363636;border-radius:16px;"></div>
<div class="r" style="left:771px;top:1042px;width:58px;height:28px;background:#4a4a4a;border-radius:14px;"></div>
<svg class="s" style="left:620px;top:1047px;" width="18" height="18" viewBox="0 0 18 18"><circle cx="10.5" cy="7.5" r="5.5" fill="none" stroke="#e0e0e0" stroke-width="1.6"/><path d="M6.5 11.5 L1.5 16.5" stroke="#e0e0e0" stroke-width="1.8"/></svg>
<div class="t" style="left:646.5px;top:1056px;font-size:13px;color:#c8c8c8;transform:translate(0,-50%);letter-spacing:0.5px;">検索</div>
<svg class="s" style="left:786px;top:1046px;" width="26" height="20" viewBox="0 0 26 20"><path d="M9 3 L9 1.5 L17 1.5 L17 3" fill="none" stroke="#333" stroke-width="1"/><rect x="1" y="3" width="24" height="16" rx="2" fill="#d97d0a"/><rect x="1" y="3" width="24" height="8" rx="2" fill="#f0a020"/><rect x="11" y="9" width="4" height="4" fill="#ffe066"/></svg>
<svg class="s" style="left:840px;top:1044px;" width="26" height="24" viewBox="0 0 26 24"><rect x="9" y="1" width="15" height="14" rx="1.5" fill="#e8e8e8"/><rect x="1" y="8" width="15" height="14" rx="1.5" fill="#8a8a8a" opacity="0.9"/></svg>
<svg class="s" style="left:884px;top:1043px;" width="26" height="26" viewBox="0 0 26 26"><circle cx="13" cy="13" r="11.5" fill="#7b63d6"/><path d="M2 24 L5 19" stroke="#7b63d6" stroke-width="3"/><rect x="7" y="9" width="9" height="8" rx="1.5" fill="#fff"/><path d="M16.5 12 L20 10 L20 16 L16.5 14 Z" fill="#fff"/></svg>
<svg class="s" style="left:927px;top:1042px;" width="30" height="28" viewBox="0 0 30 28"><defs><linearGradient id="edg" x1="0" y1="0" x2="1" y2="1"><stop offset="0" stop-color="#35c1f1"/><stop offset="0.6" stop-color="#1a7fd8"/><stop offset="1" stop-color="#0c59a4"/></linearGradient></defs><circle cx="14" cy="14" r="12.5" fill="url(#edg)"/><path d="M8 15 Q9 6 17 7 Q25 8 25 15 L12 15 Q13 20 19 20 Q22 20 25 18 Q22 26 13 25 Q5 23 8 15Z" fill="#52d17a" opacity="0.85"/><circle cx="16" cy="15" r="4" fill="#1f1f1f"/></svg>
<svg class="s" style="left:971px;top:1043px;" width="28" height="24" viewBox="0 0 28 24"><path d="M1 3 Q1 1 3 1 L10 1 L13 4 L25 4 Q27 4 27 6 L27 21 Q27 23 25 23 L3 23 Q1 23 1 21 Z" fill="#f5c431"/><path d="M1 9 L27 9 L27 21 Q27 23 25 23 L3 23 Q1 23 1 21 Z" fill="#ffd866"/><rect x="7" y="14" width="14" height="9" fill="#1c8ce0"/></svg>
<div class="r" style="left:980px;top:1073px;width:8px;height:2.5px;background:#9a9a9a;border-radius:1px;"></div>
<svg class="s" style="left:1016px;top:1042px;" width="26" height="27" viewBox="0 0 26 27"><path d="M7 7 Q7 1.5 13 1.5 Q19 1.5 19 7" fill="none" stroke="#2a9be0" stroke-width="1.6"/><rect x="1" y="6" width="24" height="20" rx="3" fill="#f4f4f4"/><rect x="8" y="11" width="4.5" height="4.5" fill="#f25022"/><rect x="13.5" y="11" width="4.5" height="4.5" fill="#7fba00"/><rect x="8" y="16.5" width="4.5" height="4.5" fill="#00a4ef"/><rect x="13.5" y="16.5" width="4.5" height="4.5" fill="#ffb900"/></svg>
<svg class="s" style="left:1060px;top:1043px;" width="26" height="26" viewBox="0 0 26 26"><path d="M13 1.5 L23.5 7.5 L23.5 18.5 L13 24.5 L2.5 18.5 L2.5 7.5 Z" fill="none" stroke="#e0e0e0" stroke-width="1.6"/><path d="M13 6.5 L18.5 9.5 L18.5 16 L13 19 L7.5 16 L7.5 9.5 Z M7.5 9.5 L13 12.5 L18.5 9.5 M13 12.5 L13 19" fill="none" stroke="#e0e0e0" stroke-width="1.4"/></svg>
<svg class="s" style="left:1103px;top:1044px;" width="26" height="22" viewBox="0 0 26 22"><rect x="0.5" y="0.5" width="25" height="21" fill="#0c0c0c" stroke="#6a6a6a" stroke-width="1"/><rect x="0.5" y="0.5" width="25" height="3.5" fill="#4a4a4a"/><text x="3" y="11" font-size="6" fill="#d0d0d0" font-family="Liberation Mono">C:\</text><path d="M9 15 L20 15" stroke="#d0d0d0" stroke-width="1"/></svg>
<svg class="s" style="left:1147px;top:1042px;" width="26" height="26" viewBox="0 0 26 26"><rect x="2" y="1" width="22" height="24" fill="#e8f4e8" stroke="#8cc98c" stroke-width="1"/><path d="M6 5 L18 21 M18 5 L6 21" stroke="#1e8a3a" stroke-width="3.2"/><path d="M14 14 L25 24" stroke="#c8c8c8" stroke-width="2"/></svg>
<svg class="s" style="left:1192px;top:1042px;" width="28" height="27" viewBox="0 0 28 27"><path d="M3 14 Q2 3 13 2 Q25 2 25 11 Q25 15 20 15 Q16 15 17 19 Q18 24 12 24 Q4 24 3 14Z" fill="#6bb9ef"/><circle cx="9" cy="10" r="2" fill="#f04040"/><circle cx="14" cy="6.5" r="2" fill="#f8c020"/><circle cx="19.5" cy="8.5" r="2" fill="#30c050"/><path d="M22 12 L13 26" stroke="#c07830" stroke-width="2.4"/></svg>
<svg class="s" style="left:1235px;top:1044px;" width="28" height="22" viewBox="0 0 28 22"><rect x="1" y="3" width="26" height="18" rx="1.5" fill="#0f78d4"/><path d="M1 6 L14 14 L27 6 L27 4 L14 12 L1 4 Z" fill="#50b0ff"/><path d="M14 1 L27 8 L14 15 L1 8 Z" fill="#2a90ec"/></svg>
<svg class="s" style="left:1280px;top:1043px;" width="26" height="26" viewBox="0 0 26 26"><rect x="0" y="0" width="26" height="26" fill="#1a3c8c"/><path d="M5 4 L7 14 M10 3 L10 14 M15 3 L14 14 M20 4 L18 14" stroke="#fff" stroke-width="2"/><text x="13" y="23" font-size="9" font-weight="bold" font-style="italic" fill="#ff3030" text-anchor="middle" font-family="Liberation Sans">Go!</text></svg>
<div class="r" style="left:1289px;top:1073px;width:8px;height:2.5px;background:#9a9a9a;border-radius:1px;"></div>
<div class="r" style="left:1317px;top:1037px;width:42px;height:42px;background:#333333;border-radius:5px;border:1px solid #3c3c3c;"></div>
<svg class="s" style="left:1325px;top:1044px;" width="28" height="26" viewBox="0 0 28 26"><rect x="8" y="1" width="19" height="24" rx="2" fill="#21a366"/><rect x="8" y="1" width="19" height="8" fill="#33c481"/><rect x="8" y="17" width="19" height="8" fill="#185c37"/><rect x="1" y="6" width="14" height="14" rx="2" fill="#107c41"/><text x="8" y="17" font-size="11" font-weight="bold" fill="#fff" text-anchor="middle" font-family="Liberation Sans">X</text></svg>
<div class="r" style="left:1329px;top:1073px;width:16px;height:3px;background:#4cc2ff;border-radius:1.5px;"></div>
<svg class="s" style="left:1673px;top:1049px;" width="14" height="9" viewBox="0 0 14 9"><path d="M1.5 7.5 L7 2 L12.5 7.5" fill="none" stroke="#e0e0e0" stroke-width="1.3"/></svg>
<div class="t" style="left:1708px;top:1056px;font-size:17px;color:#e0e0e0;transform:translate(-50%,-50%);">A</div>
<svg class="s" style="left:1731px;top:1045px;" width="20" height="20" viewBox="0 0 20 20"><rect x="1" y="3" width="13" height="10" rx="1" fill="none" stroke="#e0e0e0" stroke-width="1.2"/><path d="M4 16 L11 16 M7.5 13 L7.5 16" stroke="#e0e0e0" stroke-width="1.2"/><rect x="13" y="1" width="5" height="8" fill="#1f1f1f" stroke="#e0e0e0" stroke-width="1.1"/></svg>
<svg class="s" style="left:1755px;top:1047px;" width="18" height="16" viewBox="0 0 18 16"><path d="M1.5 5.5 L4.5 5.5 L8.5 2 L8.5 14 L4.5 10.5 L1.5 10.5 Z" fill="none" stroke="#e0e0e0" stroke-width="1.2"/><path d="M11 5.5 Q12.5 8 11 10.5 M13.5 3.5 Q16.5 8 13.5 12.5" fill="none" stroke="#e0e0e0" stroke-width="1.2"/></svg>
<svg class="s" style="left:1779px;top:1048px;" width="20" height="14" viewBox="0 0 20 14"><rect x="4" y="3" width="13" height="9" rx="1.5" fill="#e0e0e0"/><rect x="17" y="5.5" width="2" height="4" fill="#e0e0e0"/><path d="M3 1 L3 5 M6 1 L6 5 M1 5 L8 5" stroke="#e0e0e0" stroke-width="1.2"/></svg>
<div class="t" style="left:1873px;top:1048.5px;font-size:12.5px;color:#fff;transform:translate(-100%,-50%);letter-spacing:-1.056px;">16:51</div>
<div class="t" style="left:1873px;top:1064.5px;font-size:12.5px;color:#fff;transform:translate(-100%,-50%);letter-spacing:-0.156px;">2023/08/22</div>
<div class="r" style="left:1884px;top:1048px;width:17px;height:17px;background:#1e90ff;border-radius:50%;"></div>
<div class="t" style="left:1892.5px;top:1056.5px;font-size:11px;color:#1f1f1f;transform:translate(-50%,-50%);">3</div>
<div class="r" style="left:161px;top:247px;width:451px;height:33px;background:#000;"></div>
<div class="r" style="left:26px;top:279px;width:1022px;height:1px;background:#000;"></div>
<div class="r" style="left:612px;top:247px;width:1px;height:33px;background:#000;"></div>
<div class="r" style="left:792px;top:247px;width:1px;height:33px;background:#000;"></div>
<div class="r" style="left:912px;top:247px;width:1px;height:33px;background:#000;"></div>
<div class="t" style="left:93.2px;top:262.5px;font-size:13px;color:#000;transform:translate(-50%,-50%);letter-spacing:0.667px;">工事名</div>
<div class="t" style="left:701.8px;top:255px;font-size:12px;color:#000;transform:translate(-50%,-50%);letter-spacing:-0.167px;">部材検査記録</div>
<div class="t" style="left:703px;top:269.5px;font-size:12px;color:#000;transform:translate(-50%,-50%);letter-spacing:-0.836px;">（主桁&nbsp;&nbsp;G1）</div>
<div class="t" style="left:852.3px;top:263px;font-size:12.5px;color:#000;transform:translate(-50%,-50%);letter-spacing:-0.227px;">J7～J13</div>
<div class="t" style="left:981px;top:263px;font-size:11.5px;color:#000;transform:translate(-50%,-50%);letter-spacing:-0.872px;">単位:mm</div>
<div class="r" style="left:24px;top:244px;width:139px;height:37px;background:none;border:2px solid #107c41;"></div>
<div class="r" style="left:158px;top:276px;width:6px;height:6px;background:#107c41;border:1px solid #fff;"></div>
<div class="r" style="left:26px;top:602px;width:196px;height:35px;background:#c8c8c8;"></div>
<div class="r" style="left:26px;top:602px;width:196px;height:1px;background:#000;"></div>
<div class="r" style="left:101px;top:602px;width:1px;height:35px;background:#000;"></div>
<div class="r" style="left:221px;top:602px;width:1px;height:35px;background:#000;"></div>
<div class="t" style="left:63.2px;top:620px;font-size:15px;color:#000;transform:translate(-50%,-50%);font-weight:bold;letter-spacing:-0.25px;">部材番号</div>
<div class="t" style="left:1042.5px;top:628.5px;font-size:11px;color:#ff0000;transform:translate(-100%,-50%);letter-spacing:-1.694px;">※仮組精度が厳しいため、部材精度は50%管理とする。</div>
<div class="r" style="left:26px;top:636px;width:1022px;height:1px;background:#000;"></div>
<div class="r" style="left:26px;top:653px;width:1022px;height:1px;background:#000;"></div>
<div class="r" style="left:536px;top:636px;width:1px;height:289px;background:#000;"></div>
<div class="t" style="left:281px;top:645px;font-size:11px;color:#000;transform:translate(-50%,-50%);font-weight:bold;letter-spacing:-0.505px;">反&nbsp;Ｘ&nbsp;側</div>
<div class="t" style="left:791px;top:645px;font-size:11px;color:#000;transform:translate(-50%,-50%);font-weight:bold;letter-spacing:-0.854px;">Ｘ&nbsp;側</div>
<div class="r" style="left:101px;top:653px;width:1px;height:272px;background:#000;"></div>
<div class="r" style="left:161px;top:653px;width:1px;height:272px;background:#000;"></div>
<div class="r" style="left:221px;top:653px;width:1px;height:272px;background:#000;"></div>
<div class="r" style="left:281px;top:670px;width:1px;height:255px;background:#000;"></div>
<div class="r" style="left:341px;top:653px;width:1px;height:272px;background:#000;"></div>
<div class="r" style="left:401px;top:670px;width:1px;height:255px;background:#000;"></div>
<div class="r" style="left:461px;top:653px;width:1px;height:272px;background:#000;"></div>
<div class="r" style="left:221px;top:670px;width:241px;height:1px;background:#000;"></div>
<div class="r" style="left:26px;top:687px;width:511px;height:1px;background:#000;"></div>
<div class="t" style="left:64.0px;top:670.5px;font-size:10.5px;color:#000;transform:translate(-50%,-50%);letter-spacing:-1.15px;">測定項目</div>
<div class="t" style="left:131.5px;top:670.5px;font-size:10.5px;color:#000;transform:translate(-50%,-50%);letter-spacing:-0.461px;">記&nbsp;&nbsp;号</div>
<div class="t" style="left:191.5px;top:670.5px;font-size:10.5px;color:#000;transform:translate(-50%,-50%);letter-spacing:-1.0px;">規定値</div>
<div class="t" style="left:281.5px;top:662.0px;font-size:10.5px;color:#000;transform:translate(-50%,-50%);letter-spacing:-1.0px;">社内検査</div>
<div class="t" style="left:251.5px;top:679.0px;font-size:10.5px;color:#000;transform:translate(-50%,-50%);letter-spacing:-0.5px;">測定値</div>
<div class="t" style="left:311.5px;top:679.0px;font-size:10.5px;color:#000;transform:translate(-50%,-50%);letter-spacing:-0.807px;">誤&nbsp;差</div>
<div class="t" style="left:401.5px;top:662.0px;font-size:10.5px;color:#000;transform:translate(-50%,-50%);letter-spacing:-1.071px;">社内検査員確認</div>
<div class="t" style="left:371.5px;top:679.0px;font-size:10.5px;color:#000;transform:translate(-50%,-50%);letter-spacing:-0.5px;">測定値</div>
<div class="t" style="left:431.5px;top:679.0px;font-size:10.5px;color:#000;transform:translate(-50%,-50%);letter-spacing:-0.807px;">誤&nbsp;差</div>
<div class="t" style="left:499.0px;top:663.0px;font-size:10.5px;color:#000;transform:translate(-50%,-50%);letter-spacing:0.25px;">出来形規格値</div>
<div class="t" style="left:499.0px;top:678.0px;font-size:9.5px;color:#ff0000;transform:translate(-50%,-50%);letter-spacing:-0.478px;">(50%管理)</div>
<div class="r" style="left:101px;top:704px;width:361px;height:1px;background:#000;"></div>
<div class="t" style="left:64.0px;top:697.5px;font-size:10.5px;color:#000;transform:translate(-50%,-50%);letter-spacing:-1.167px;">部&nbsp;&nbsp;材&nbsp;&nbsp;長</div>
<div class="t" style="left:64.0px;top:710.5px;font-size:10.5px;color:#000;transform:translate(-50%,-50%);letter-spacing:0.25px;">(上側)</div>
<div class="t" style="left:131.5px;top:696.0px;font-size:10.5px;color:#000;transform:translate(-50%,-50%);letter-spacing:-0.3px;">UL</div>
<div class="t" style="left:217px;top:696px;font-size:10.5px;color:#000;transform:translate(-100%,-50%);letter-spacing:-0.456px;">6,000</div>
<div class="t" style="left:276px;top:696px;font-size:10.5px;color:#000;transform:translate(-100%,-50%);letter-spacing:-0.456px;">6,002</div>
<div class="t" style="left:336px;top:696px;font-size:10.5px;color:#000;transform:translate(-100%,-50%);letter-spacing:1.008px;">+2</div>
<div class="t" style="left:131.5px;top:713.0px;font-size:10.5px;color:#000;transform:translate(-50%,-50%);letter-spacing:-0.3px;">UR</div>
<div class="t" style="left:217px;top:713px;font-size:10.5px;color:#000;transform:translate(-100%,-50%);letter-spacing:-0.456px;">6,000</div>
<div class="t" style="left:276px;top:713px;font-size:10.5px;color:#000;transform:translate(-100%,-50%);letter-spacing:-0.456px;">6,000</div>
<div class="t" style="left:336px;top:713px;font-size:10.5px;color:#000;transform:translate(-100%,-50%);letter-spacing:1.008px;">+0</div>
<div class="t" style="left:499.0px;top:704.5px;font-size:10.5px;color:#000;transform:translate(-50%,-50%);letter-spacing:0.799px;">±3(±1)</div>
<div class="r" style="left:26px;top:721px;width:511px;height:1px;background:#000;"></div>
<div class="r" style="left:101px;top:738px;width:361px;height:1px;background:#000;"></div>
<div class="t" style="left:64.0px;top:738.5px;font-size:10.5px;color:#000;transform:translate(-50%,-50%);letter-spacing:-1.167px;">部&nbsp;&nbsp;材&nbsp;&nbsp;高</div>
<div class="t" style="left:131.5px;top:730.0px;font-size:10.5px;color:#000;transform:translate(-50%,-50%);letter-spacing:-0.3px;">H1</div>
<div class="t" style="left:217px;top:730px;font-size:10.5px;color:#000;transform:translate(-100%,-50%);letter-spacing:-0.456px;">2,741</div>
<div class="t" style="left:276px;top:730px;font-size:10.5px;color:#000;transform:translate(-100%,-50%);letter-spacing:-0.456px;">2,741</div>
<div class="t" style="left:336px;top:730px;font-size:10.5px;color:#000;transform:translate(-100%,-50%);letter-spacing:-0.242px;">−0</div>
<div class="t" style="left:131.5px;top:747.0px;font-size:10.5px;color:#000;transform:translate(-50%,-50%);letter-spacing:-0.3px;">H2</div>
<div class="t" style="left:217px;top:747px;font-size:10.5px;color:#000;transform:translate(-100%,-50%);letter-spacing:-0.456px;">2,741</div>
<div class="t" style="left:276px;top:747px;font-size:10.5px;color:#000;transform:translate(-100%,-50%);letter-spacing:-0.456px;">2,741</div>
<div class="t" style="left:336px;top:747px;font-size:10.5px;color:#000;transform:translate(-100%,-50%);letter-spacing:1.008px;">+0</div>
<div class="t" style="left:499.0px;top:738.5px;font-size:10.5px;color:#000;transform:translate(-50%,-50%);letter-spacing:0.799px;">±4(±2)</div>
<div class="r" style="left:26px;top:755px;width:511px;height:1px;background:#000;"></div>
<div class="r" style="left:101px;top:772px;width:361px;height:1px;background:#000;"></div>
<div class="t" style="left:64.0px;top:772.5px;font-size:10.5px;color:#000;transform:translate(-50%,-50%);letter-spacing:-2.28px;">フランジ幅</div>
<div class="t" style="left:131.5px;top:764.0px;font-size:10.5px;color:#000;transform:translate(-50%,-50%);letter-spacing:-0.3px;">W1</div>
<div class="t" style="left:217px;top:764px;font-size:10.5px;color:#000;transform:translate(-100%,-50%);letter-spacing:-0.456px;">2,440</div>
<div class="t" style="left:276px;top:764px;font-size:10.5px;color:#000;transform:translate(-100%,-50%);letter-spacing:-0.456px;">2,442</div>
<div class="t" style="left:336px;top:764px;font-size:10.5px;color:#000;transform:translate(-100%,-50%);letter-spacing:1.008px;">+2</div>
<div class="t" style="left:131.5px;top:781.0px;font-size:10.5px;color:#000;transform:translate(-50%,-50%);letter-spacing:-0.3px;">W2</div>
<div class="t" style="left:217px;top:781px;font-size:10.5px;color:#000;transform:translate(-100%,-50%);letter-spacing:-0.456px;">2,440</div>
<div class="t" style="left:276px;top:781px;font-size:10.5px;color:#000;transform:translate(-100%,-50%);letter-spacing:-0.456px;">2,442</div>
<div class="t" style="left:336px;top:781px;font-size:10.5px;color:#000;transform:translate(-100%,-50%);letter-spacing:1.008px;">+2</div>
<div class="t" style="left:499.0px;top:772.5px;font-size:10.5px;color:#000;transform:translate(-50%,-50%);letter-spacing:0.799px;">±4(±2)</div>
<div class="r" style="left:26px;top:789px;width:511px;height:1px;background:#000;"></div>
<div class="r" style="left:101px;top:806px;width:361px;height:1px;background:#000;"></div>
<div class="t" style="left:64.0px;top:806.5px;font-size:10.5px;color:#000;transform:translate(-50%,-50%);letter-spacing:-1.15px;">腹板間隔</div>
<div class="t" style="left:131.5px;top:798.0px;font-size:10.5px;color:#000;transform:translate(-50%,-50%);letter-spacing:-0.3px;">UF1</div>
<div class="t" style="left:217px;top:798px;font-size:10.5px;color:#000;transform:translate(-100%,-50%);letter-spacing:-0.456px;">2,190</div>
<div class="t" style="left:276px;top:798px;font-size:10.5px;color:#000;transform:translate(-100%,-50%);letter-spacing:-0.456px;">2,190</div>
<div class="t" style="left:336px;top:798px;font-size:10.5px;color:#000;transform:translate(-100%,-50%);letter-spacing:1.195px;">±0</div>
<div class="t" style="left:131.5px;top:815.0px;font-size:10.5px;color:#000;transform:translate(-50%,-50%);letter-spacing:-0.3px;">LF1</div>
<div class="t" style="left:217px;top:815px;font-size:10.5px;color:#000;transform:translate(-100%,-50%);letter-spacing:-0.456px;">2,190</div>
<div class="t" style="left:276px;top:815px;font-size:10.5px;color:#000;transform:translate(-100%,-50%);letter-spacing:-0.456px;">2,193</div>
<div class="t" style="left:336px;top:815px;font-size:10.5px;color:#000;transform:translate(-100%,-50%);letter-spacing:1.008px;">+3</div>
<div class="t" style="left:499.0px;top:806.5px;font-size:10.5px;color:#000;transform:translate(-50%,-50%);letter-spacing:0.799px;">±4(±2)</div>
<div class="r" style="left:26px;top:823px;width:511px;height:1px;background:#000;"></div>
<div class="r" style="left:101px;top:840px;width:361px;height:1px;background:#000;"></div>
<div class="t" style="left:64.0px;top:840.5px;font-size:10.5px;color:#000;transform:translate(-50%,-50%);letter-spacing:-1.0px;">断面対角</div>
<div class="t" style="left:131.5px;top:832.0px;font-size:10.5px;color:#000;transform:translate(-50%,-50%);letter-spacing:-0.3px;">T1</div>
<div class="t" style="left:217px;top:832px;font-size:10.5px;color:#000;transform:translate(-100%,-50%);letter-spacing:-0.456px;">3,507</div>
<div class="t" style="left:276px;top:832px;font-size:10.5px;color:#000;transform:translate(-100%,-50%);letter-spacing:-0.456px;">3,508</div>
<div class="t" style="left:336px;top:832px;font-size:10.5px;color:#000;transform:translate(-100%,-50%);letter-spacing:1.008px;">+1</div>
<div class="t" style="left:131.5px;top:849.0px;font-size:10.5px;color:#000;transform:translate(-50%,-50%);letter-spacing:-0.3px;">T2</div>
<div class="t" style="left:217px;top:849px;font-size:10.5px;color:#000;transform:translate(-100%,-50%);letter-spacing:-0.456px;">3,507</div>
<div class="t" style="left:276px;top:849px;font-size:10.5px;color:#000;transform:translate(-100%,-50%);letter-spacing:-0.456px;">3,508</div>
<div class="t" style="left:336px;top:849px;font-size:10.5px;color:#000;transform:translate(-100%,-50%);letter-spacing:1.008px;">+1</div>
<div class="t" style="left:499.0px;top:840.5px;font-size:10.5px;color:#000;transform:translate(-50%,-50%);letter-spacing:0.799px;">±4(±2)</div>
<div class="r" style="left:26px;top:857px;width:511px;height:1px;background:#000;"></div>
<div class="r" style="left:101px;top:874px;width:361px;height:1px;background:#000;"></div>
<div class="t" style="left:64.0px;top:874.5px;font-size:10.5px;color:#000;transform:translate(-50%,-50%);letter-spacing:-1.167px;">腹板の平面度</div>
<div class="t" style="left:131.5px;top:866.0px;font-size:10.5px;color:#000;transform:translate(-50%,-50%);letter-spacing:4.656px;">δ1</div>
<div class="t" style="left:217px;top:866px;font-size:10.5px;color:#000;transform:translate(-100%,-50%);letter-spacing:-1.044px;">0</div>
<div class="t" style="left:273px;top:866px;font-size:10.5px;color:#000;transform:translate(-100%,-50%);letter-spacing:-0.242px;">−1</div>
<div class="t" style="left:336px;top:866px;font-size:10.5px;color:#000;transform:translate(-100%,-50%);letter-spacing:-0.242px;">−1</div>
<div class="t" style="left:131.5px;top:883.0px;font-size:10.5px;color:#000;transform:translate(-50%,-50%);letter-spacing:4.656px;">δ2</div>
<div class="t" style="left:217px;top:883px;font-size:10.5px;color:#000;transform:translate(-100%,-50%);letter-spacing:-1.044px;">0</div>
<div class="t" style="left:273px;top:883px;font-size:10.5px;color:#000;transform:translate(-100%,-50%);letter-spacing:-1.044px;">1</div>
<div class="t" style="left:336px;top:883px;font-size:10.5px;color:#000;transform:translate(-100%,-50%);letter-spacing:1.008px;">+1</div>
<div class="t" style="left:499.0px;top:874.5px;font-size:10.5px;color:#000;transform:translate(-50%,-50%);letter-spacing:0.479px;">±10(±5)</div>
<div class="r" style="left:26px;top:891px;width:511px;height:1px;background:#000;"></div>
<div class="r" style="left:101px;top:908px;width:436px;height:1px;background:#000;"></div>
<div class="t" style="left:64.0px;top:908.5px;font-size:10.5px;color:#000;transform:translate(-50%,-50%);letter-spacing:-2.0px;">フランジ平面度</div>
<div class="t" style="left:131.5px;top:900.0px;font-size:10.5px;color:#000;transform:translate(-50%,-50%);letter-spacing:4.656px;">δ3</div>
<div class="t" style="left:217px;top:900px;font-size:10.5px;color:#000;transform:translate(-100%,-50%);letter-spacing:-1.044px;">0</div>
<div class="t" style="left:336px;top:900px;font-size:10.5px;color:#000;transform:translate(-100%,-50%);letter-spacing:1.195px;">±0</div>
<div class="t" style="left:131.5px;top:917.0px;font-size:10.5px;color:#000;transform:translate(-50%,-50%);letter-spacing:4.656px;">δ4</div>
<div class="t" style="left:217px;top:917px;font-size:10.5px;color:#000;transform:translate(-100%,-50%);letter-spacing:-1.044px;">0</div>
<div class="t" style="left:336px;top:917px;font-size:10.5px;color:#000;transform:translate(-100%,-50%);letter-spacing:1.195px;">±0</div>
<div class="t" style="left:499.0px;top:900.0px;font-size:10.5px;color:#000;transform:translate(-50%,-50%);letter-spacing:0.799px;">±2(±1)</div>
<div class="t" style="left:499.0px;top:917.0px;font-size:10.5px;color:#000;transform:translate(-50%,-50%);letter-spacing:0.799px;">±4(±2)</div>
<div class="r" style="left:612px;top:653px;width:1px;height:272px;background:#000;"></div>
<div class="r" style="left:672px;top:653px;width:1px;height:272px;background:#000;"></div>
<div class="r" style="left:732px;top:653px;width:1px;height:272px;background:#000;"></div>
<div class="r" style="left:792px;top:670px;width:1px;height:255px;background:#000;"></div>
<div class="r" style="left:852px;top:653px;width:1px;height:272px;background:#000;"></div>
<div class="r" style="left:912px;top:670px;width:1px;height:255px;background:#000;"></div>
<div class="r" style="left:973px;top:653px;width:1px;height:272px;background:#000;"></div>
<div class="r" style="left:732px;top:670px;width:242px;height:1px;background:#000;"></div>
<div class="r" style="left:536px;top:687px;width:512px;height:1px;background:#000;"></div>
<div class="t" style="left:574.5px;top:670.5px;font-size:10.5px;color:#000;transform:translate(-50%,-50%);letter-spacing:-1.15px;">測定項目</div>
<div class="t" style="left:642.5px;top:670.5px;font-size:10.5px;color:#000;transform:translate(-50%,-50%);letter-spacing:-0.461px;">記&nbsp;&nbsp;号</div>
<div class="t" style="left:702.5px;top:670.5px;font-size:10.5px;color:#000;transform:translate(-50%,-50%);letter-spacing:-1.0px;">規定値</div>
<div class="t" style="left:792.5px;top:662.0px;font-size:10.5px;color:#000;transform:translate(-50%,-50%);letter-spacing:-1.0px;">社内検査</div>
<div class="t" style="left:762.5px;top:679.0px;font-size:10.5px;color:#000;transform:translate(-50%,-50%);letter-spacing:-0.5px;">測定値</div>
<div class="t" style="left:822.5px;top:679.0px;font-size:10.5px;color:#000;transform:translate(-50%,-50%);letter-spacing:-0.807px;">誤&nbsp;差</div>
<div class="t" style="left:913.0px;top:662.0px;font-size:10.5px;color:#000;transform:translate(-50%,-50%);letter-spacing:-1.071px;">社内検査員確認</div>
<div class="t" style="left:882.5px;top:679.0px;font-size:10.5px;color:#000;transform:translate(-50%,-50%);letter-spacing:-0.5px;">測定値</div>
<div class="t" style="left:943.0px;top:679.0px;font-size:10.5px;color:#000;transform:translate(-50%,-50%);letter-spacing:-0.807px;">誤&nbsp;差</div>
<div class="t" style="left:1010.5px;top:663.0px;font-size:10.5px;color:#000;transform:translate(-50%,-50%);letter-spacing:0.25px;">出来形規格値</div>
<div class="t" style="left:1010.5px;top:678.0px;font-size:9.5px;color:#ff0000;transform:translate(-50%,-50%);letter-spacing:-0.478px;">(50%管理)</div>
<div class="r" style="left:612px;top:704px;width:362px;height:1px;background:#000;"></div>
<div class="t" style="left:574.5px;top:697.5px;font-size:10.5px;color:#000;transform:translate(-50%,-50%);letter-spacing:-1.167px;">部&nbsp;&nbsp;材&nbsp;&nbsp;長</div>
<div class="t" style="left:574.5px;top:710.5px;font-size:10.5px;color:#000;transform:translate(-50%,-50%);letter-spacing:0.25px;">(下側)</div>
<div class="t" style="left:642.5px;top:696.0px;font-size:10.5px;color:#000;transform:translate(-50%,-50%);letter-spacing:-0.3px;">LL</div>
<div class="t" style="left:728px;top:696px;font-size:10.5px;color:#000;transform:translate(-100%,-50%);letter-spacing:-0.456px;">6,000</div>
<div class="t" style="left:787px;top:696px;font-size:10.5px;color:#000;transform:translate(-100%,-50%);letter-spacing:-0.456px;">6,001</div>
<div class="t" style="left:847px;top:696px;font-size:10.5px;color:#000;transform:translate(-100%,-50%);letter-spacing:1.008px;">+1</div>
<div class="t" style="left:642.5px;top:713.0px;font-size:10.5px;color:#000;transform:translate(-50%,-50%);letter-spacing:-0.3px;">LR</div>
<div class="t" style="left:728px;top:713px;font-size:10.5px;color:#000;transform:translate(-100%,-50%);letter-spacing:-0.456px;">6,000</div>
<div class="t" style="left:787px;top:713px;font-size:10.5px;color:#000;transform:translate(-100%,-50%);letter-spacing:-0.456px;">6,000</div>
<div class="t" style="left:847px;top:713px;font-size:10.5px;color:#000;transform:translate(-100%,-50%);letter-spacing:-0.242px;">−0</div>
<div class="t" style="left:1010.5px;top:704.5px;font-size:10.5px;color:#000;transform:translate(-50%,-50%);letter-spacing:0.799px;">±3(±1)</div>
<div class="r" style="left:536px;top:721px;width:512px;height:1px;background:#000;"></div>
<div class="r" style="left:612px;top:738px;width:362px;height:1px;background:#000;"></div>
<div class="t" style="left:574.5px;top:738.5px;font-size:10.5px;color:#000;transform:translate(-50%,-50%);letter-spacing:-1.167px;">部&nbsp;&nbsp;材&nbsp;&nbsp;高</div>
<div class="t" style="left:642.5px;top:730.0px;font-size:10.5px;color:#000;transform:translate(-50%,-50%);letter-spacing:-0.3px;">H3</div>
<div class="t" style="left:728px;top:730px;font-size:10.5px;color:#000;transform:translate(-100%,-50%);letter-spacing:-0.456px;">2,821</div>
<div class="t" style="left:787px;top:730px;font-size:10.5px;color:#000;transform:translate(-100%,-50%);letter-spacing:-0.456px;">2,822</div>
<div class="t" style="left:847px;top:730px;font-size:10.5px;color:#000;transform:translate(-100%,-50%);letter-spacing:1.008px;">+1</div>
<div class="t" style="left:642.5px;top:747.0px;font-size:10.5px;color:#000;transform:translate(-50%,-50%);letter-spacing:-0.3px;">H4</div>
<div class="t" style="left:728px;top:747px;font-size:10.5px;color:#000;transform:translate(-100%,-50%);letter-spacing:-0.456px;">2,821</div>
<div class="t" style="left:787px;top:747px;font-size:10.5px;color:#000;transform:translate(-100%,-50%);letter-spacing:-0.456px;">2,823</div>
<div class="t" style="left:847px;top:747px;font-size:10.5px;color:#000;transform:translate(-100%,-50%);letter-spacing:1.008px;">+2</div>
<div class="t" style="left:1010.5px;top:738.5px;font-size:10.5px;color:#000;transform:translate(-50%,-50%);letter-spacing:0.799px;">±4(±2)</div>
<div class="r" style="left:536px;top:755px;width:512px;height:1px;background:#000;"></div>
<div class="r" style="left:612px;top:772px;width:362px;height:1px;background:#000;"></div>
<div class="t" style="left:574.5px;top:772.5px;font-size:10.5px;color:#000;transform:translate(-50%,-50%);letter-spacing:-2.28px;">フランジ幅</div>
<div class="t" style="left:642.5px;top:764.0px;font-size:10.5px;color:#000;transform:translate(-50%,-50%);letter-spacing:-0.3px;">W3</div>
<div class="t" style="left:728px;top:764px;font-size:10.5px;color:#000;transform:translate(-100%,-50%);letter-spacing:-0.456px;">2,440</div>
<div class="t" style="left:787px;top:764px;font-size:10.5px;color:#000;transform:translate(-100%,-50%);letter-spacing:-0.456px;">2,443</div>
<div class="t" style="left:847px;top:764px;font-size:10.5px;color:#000;transform:translate(-100%,-50%);letter-spacing:1.008px;">+3</div>
<div class="t" style="left:642.5px;top:781.0px;font-size:10.5px;color:#000;transform:translate(-50%,-50%);letter-spacing:-0.3px;">W4</div>
<div class="t" style="left:728px;top:781px;font-size:10.5px;color:#000;transform:translate(-100%,-50%);letter-spacing:-0.456px;">2,440</div>
<div class="t" style="left:787px;top:781px;font-size:10.5px;color:#000;transform:translate(-100%,-50%);letter-spacing:-0.456px;">2,442</div>
<div class="t" style="left:847px;top:781px;font-size:10.5px;color:#000;transform:translate(-100%,-50%);letter-spacing:1.008px;">+2</div>
<div class="t" style="left:1010.5px;top:772.5px;font-size:10.5px;color:#000;transform:translate(-50%,-50%);letter-spacing:0.799px;">±4(±2)</div>
<div class="r" style="left:536px;top:789px;width:512px;height:1px;background:#000;"></div>
<div class="r" style="left:612px;top:806px;width:362px;height:1px;background:#000;"></div>
<div class="t" style="left:574.5px;top:806.5px;font-size:10.5px;color:#000;transform:translate(-50%,-50%);letter-spacing:-1.15px;">腹板間隔</div>
<div class="t" style="left:642.5px;top:798.0px;font-size:10.5px;color:#000;transform:translate(-50%,-50%);letter-spacing:-0.3px;">UF2</div>
<div class="t" style="left:728px;top:798px;font-size:10.5px;color:#000;transform:translate(-100%,-50%);letter-spacing:-0.456px;">2,190</div>
<div class="t" style="left:787px;top:798px;font-size:10.5px;color:#000;transform:translate(-100%,-50%);letter-spacing:-0.456px;">2,193</div>
<div class="t" style="left:847px;top:798px;font-size:10.5px;color:#000;transform:translate(-100%,-50%);letter-spacing:1.008px;">+3</div>
<div class="t" style="left:642.5px;top:815.0px;font-size:10.5px;color:#000;transform:translate(-50%,-50%);letter-spacing:-0.3px;">LF2</div>
<div class="t" style="left:728px;top:815px;font-size:10.5px;color:#000;transform:translate(-100%,-50%);letter-spacing:-0.456px;">2,190</div>
<div class="t" style="left:787px;top:815px;font-size:10.5px;color:#000;transform:translate(-100%,-50%);letter-spacing:-0.456px;">2,192</div>
<div class="t" style="left:847px;top:815px;font-size:10.5px;color:#000;transform:translate(-100%,-50%);letter-spacing:1.008px;">+2</div>
<div class="t" style="left:1010.5px;top:806.5px;font-size:10.5px;color:#000;transform:translate(-50%,-50%);letter-spacing:0.799px;">±4(±2)</div>
<div class="r" style="left:536px;top:823px;width:512px;height:1px;background:#000;"></div>
<div class="r" style="left:612px;top:840px;width:362px;height:1px;background:#000;"></div>
<div class="t" style="left:574.5px;top:840.5px;font-size:10.5px;color:#000;transform:translate(-50%,-50%);letter-spacing:-1.0px;">断面対角</div>
<div class="t" style="left:642.5px;top:832.0px;font-size:10.5px;color:#000;transform:translate(-50%,-50%);letter-spacing:-0.3px;">T3</div>
<div class="t" style="left:728px;top:832px;font-size:10.5px;color:#000;transform:translate(-100%,-50%);letter-spacing:-0.456px;">3,570</div>
<div class="t" style="left:787px;top:832px;font-size:10.5px;color:#000;transform:translate(-100%,-50%);letter-spacing:-0.456px;">3,570</div>
<div class="t" style="left:847px;top:832px;font-size:10.5px;color:#000;transform:translate(-100%,-50%);letter-spacing:1.195px;">±0</div>
<div class="t" style="left:642.5px;top:849.0px;font-size:10.5px;color:#000;transform:translate(-50%,-50%);letter-spacing:-0.3px;">T4</div>
<div class="t" style="left:728px;top:849px;font-size:10.5px;color:#000;transform:translate(-100%,-50%);letter-spacing:-0.456px;">3,570</div>
<div class="t" style="left:787px;top:849px;font-size:10.5px;color:#000;transform:translate(-100%,-50%);letter-spacing:-0.456px;">3,571</div>
<div class="t" style="left:847px;top:849px;font-size:10.5px;color:#000;transform:translate(-100%,-50%);letter-spacing:1.008px;">+1</div>
<div class="t" style="left:1010.5px;top:840.5px;font-size:10.5px;color:#000;transform:translate(-50%,-50%);letter-spacing:0.799px;">±4(±2)</div>
<div class="r" style="left:536px;top:857px;width:512px;height:1px;background:#000;"></div>
<div class="r" style="left:612px;top:874px;width:362px;height:1px;background:#000;"></div>
<div class="t" style="left:574.5px;top:874.5px;font-size:10.5px;color:#000;transform:translate(-50%,-50%);letter-spacing:-1.167px;">腹板の平面度</div>
<div class="t" style="left:642.5px;top:866.0px;font-size:10.5px;color:#000;transform:translate(-50%,-50%);letter-spacing:4.656px;">δ5</div>
<div class="t" style="left:728px;top:866px;font-size:10.5px;color:#000;transform:translate(-100%,-50%);letter-spacing:-1.044px;">0</div>
<div class="t" style="left:784px;top:866px;font-size:10.5px;color:#000;transform:translate(-100%,-50%);letter-spacing:-1.044px;">1</div>
<div class="t" style="left:847px;top:866px;font-size:10.5px;color:#000;transform:translate(-100%,-50%);letter-spacing:1.008px;">+1</div>
<div class="t" style="left:642.5px;top:883.0px;font-size:10.5px;color:#000;transform:translate(-50%,-50%);letter-spacing:4.656px;">δ6</div>
<div class="t" style="left:728px;top:883px;font-size:10.5px;color:#000;transform:translate(-100%,-50%);letter-spacing:-1.044px;">0</div>
<div class="t" style="left:784px;top:883px;font-size:10.5px;color:#000;transform:translate(-100%,-50%);letter-spacing:-0.242px;">−1</div>
<div class="t" style="left:847px;top:883px;font-size:10.5px;color:#000;transform:translate(-100%,-50%);letter-spacing:-0.242px;">−1</div>
<div class="t" style="left:1010.5px;top:874.5px;font-size:10.5px;color:#000;transform:translate(-50%,-50%);letter-spacing:0.479px;">±10(±5)</div>
<div class="r" style="left:536px;top:891px;width:512px;height:1px;background:#000;"></div>
<div class="r" style="left:612px;top:908px;width:436px;height:1px;background:#000;"></div>
<div class="t" style="left:574.5px;top:908.5px;font-size:10.5px;color:#000;transform:translate(-50%,-50%);letter-spacing:-2.0px;">フランジ平面度</div>
<div class="t" style="left:642.5px;top:900.0px;font-size:10.5px;color:#000;transform:translate(-50%,-50%);letter-spacing:4.656px;">δ7</div>
<div class="t" style="left:728px;top:900px;font-size:10.5px;color:#000;transform:translate(-100%,-50%);letter-spacing:-1.044px;">0</div>
<div class="t" style="left:847px;top:900px;font-size:10.5px;color:#000;transform:translate(-100%,-50%);letter-spacing:1.195px;">±0</div>
<div class="t" style="left:642.5px;top:917.0px;font-size:10.5px;color:#000;transform:translate(-50%,-50%);letter-spacing:4.656px;">δ8</div>
<div class="t" style="left:728px;top:917px;font-size:10.5px;color:#000;transform:translate(-100%,-50%);letter-spacing:-1.044px;">0</div>
<div class="t" style="left:847px;top:917px;font-size:10.5px;color:#000;transform:translate(-100%,-50%);letter-spacing:1.195px;">±0</div>
<div class="t" style="left:1010.5px;top:900.0px;font-size:10.5px;color:#000;transform:translate(-50%,-50%);letter-spacing:0.799px;">±2(±1)</div>
<div class="t" style="left:1010.5px;top:917.0px;font-size:10.5px;color:#000;transform:translate(-50%,-50%);letter-spacing:0.799px;">±2(±1)</div>
<div class="t" style="left:1168.2px;top:661.5px;font-size:12px;color:#000;transform:translate(-50%,-50%);letter-spacing:-1.7px;">上フランジ</div>
<div class="t" style="left:1312.2px;top:661.5px;font-size:12px;color:#000;transform:translate(-50%,-50%);letter-spacing:-1.5px;">下フランジ</div>
<div class="t" style="left:1120.2px;top:679.5px;font-size:12px;color:#000;transform:translate(-50%,-50%);letter-spacing:-2.0px;">リスト長</div>
<div class="t" style="left:1168px;top:679.5px;font-size:12px;color:#000;transform:translate(-50%,-50%);letter-spacing:-1.333px;">伸ばし</div>
<div class="t" style="left:1216.4px;top:679.5px;font-size:12px;color:#000;transform:translate(-50%,-50%);letter-spacing:-0.333px;">部材長</div>
<div class="t" style="left:1264.2px;top:679.5px;font-size:12px;color:#000;transform:translate(-50%,-50%);letter-spacing:-2.0px;">リスト長</div>
<div class="t" style="left:1312px;top:679.5px;font-size:12px;color:#000;transform:translate(-50%,-50%);letter-spacing:-1.333px;">伸ばし</div>
<div class="t" style="left:1360.5px;top:679.5px;font-size:12px;color:#000;transform:translate(-50%,-50%);letter-spacing:-0.2px;">部材長</div>
<div class="t" style="left:1121px;top:696.5px;font-size:11.5px;color:#000;transform:translate(-50%,-50%);letter-spacing:-0.698px;">6001.6</div>
<div class="t" style="left:1169px;top:696.5px;font-size:11.5px;color:#000;transform:translate(-50%,-50%);letter-spacing:-1.167px;">0.6</div>
<div class="t" style="left:1217px;top:696.5px;font-size:11.5px;color:#000;transform:translate(-50%,-50%);letter-spacing:-0.723px;">5998</div>
<div class="t" style="left:1264.8px;top:696.5px;font-size:11.5px;color:#000;transform:translate(-50%,-50%);letter-spacing:-0.698px;">6002.2</div>
<div class="t" style="left:1313px;top:696.5px;font-size:11.5px;color:#000;transform:translate(-50%,-50%);letter-spacing:-1.1px;">0.6</div>
<div class="t" style="left:1360.8px;top:696.5px;font-size:11.5px;color:#000;transform:translate(-50%,-50%);letter-spacing:-0.648px;">5999</div>
<div class="t" style="left:1121px;top:713.5px;font-size:11.5px;color:#000;transform:translate(-50%,-50%);letter-spacing:-0.698px;">6001.6</div>
<div class="t" style="left:1169px;top:713.5px;font-size:11.5px;color:#000;transform:translate(-50%,-50%);letter-spacing:-1.167px;">0.6</div>
<div class="t" style="left:1217px;top:713.5px;font-size:11.5px;color:#000;transform:translate(-50%,-50%);letter-spacing:-0.723px;">5998</div>
<div class="t" style="left:1264.8px;top:713.5px;font-size:11.5px;color:#000;transform:translate(-50%,-50%);letter-spacing:-0.698px;">6002.2</div>
<div class="t" style="left:1313px;top:713.5px;font-size:11.5px;color:#000;transform:translate(-50%,-50%);letter-spacing:-1.1px;">0.6</div>
<div class="t" style="left:1360.8px;top:713.5px;font-size:11.5px;color:#000;transform:translate(-50%,-50%);letter-spacing:-0.648px;">5999</div>
<svg class="s" style="left:0px;top:0px;" width="1100" height="700" viewBox="0 0 1100 700"><g fill="none" stroke="#9c9c9c" stroke-width="4" stroke-linecap="butt" stroke-linejoin="miter"><path d="M394 561 L408.5 553 L408.5 607 M394 607 L421 607"/><path d="M462 588 L482.5 567.5 L522.5 597"/><circle cx="510.8" cy="562.5" r="6" stroke-width="2.8"/><path d="M541.5 583 L600 581.5"/><path d="M628.5 604 Q662 588 678.5 569 M630 554 L640 560 M622 572.5 L636.5 581.5 M665 551 L674 557 M671.5 545.5 L680 553"/></g><text x="116" y="298" font-size="11.5" fill="#000" text-anchor="start" dominant-baseline="central" letter-spacing="0.8" font-weight="normal" font-family="Liberation Sans">寸法押さえ</text><line x1="116" y1="303.5" x2="179" y2="303.5" stroke="#000" stroke-width="1" /><text x="236.5" y="289" font-size="11.5" fill="#000" text-anchor="middle" dominant-baseline="central" letter-spacing="-0.3" font-weight="normal" font-family="Liberation Sans">UF</text><line x1="210.5" y1="291.5" x2="210.5" y2="353.5" stroke="#000" stroke-width="1" /><line x1="257.5" y1="302.2" x2="211" y2="298.7" stroke="#000" stroke-width="1" /><path d="M211 298.7 L217.15 296.96 L216.82 301.34 Z" fill="#000"/><path d="M240.8 320.3 L181.7 313.8 L181.7 321.3 L240.8 327.5" fill="none" stroke="#000" stroke-width="1" stroke-linejoin="miter"/><line x1="155.8" y1="317.5" x2="210.5" y2="317.5" stroke="#000" stroke-width="1" /><circle cx="210.5" cy="316" r="2.2" fill="#000"/><circle cx="210.5" cy="324.7" r="3.8" fill="none" stroke="#000" stroke-width="1"/><line x1="201.5" y1="323.7" x2="201.5" y2="353.5" stroke="#000" stroke-width="1" /><line x1="210.5" y1="325" x2="238" y2="356.7" stroke="#000" stroke-width="1" /><text x="237" y="339" font-size="10" fill="#000" text-anchor="middle" dominant-baseline="central" letter-spacing="-0.3" font-weight="normal" font-family="Liberation Sans" transform="rotate(50 237 339)">T</text><line x1="161.7" y1="357" x2="161.7" y2="318" stroke="#000" stroke-width="1" /><path d="M161.7 318 L163.90 324.00 L159.50 324.00 Z" fill="#000"/><text x="151" y="339" font-size="11.5" fill="#000" text-anchor="middle" dominant-baseline="central" letter-spacing="-0.3" font-weight="normal" font-family="Liberation Sans">H</text><line x1="161.7" y1="388.3" x2="161.7" y2="421" stroke="#000" stroke-width="1" /><path d="M161.7 421 L159.50 415.00 L163.90 415.00 Z" fill="#000"/><text x="151" y="396.7" font-size="11.5" fill="#000" text-anchor="middle" dominant-baseline="central" letter-spacing="-0.3" font-weight="normal" font-family="Liberation Sans">H</text><line x1="201.5" y1="391.7" x2="201.5" y2="421.5" stroke="#000" stroke-width="1" /><line x1="210.5" y1="391.7" x2="210.5" y2="453.5" stroke="#000" stroke-width="1" /><line x1="210.5" y1="420.5" x2="239.7" y2="387.5" stroke="#000" stroke-width="1" /><text x="224" y="388" font-size="10" fill="#000" text-anchor="middle" dominant-baseline="central" letter-spacing="-0.3" font-weight="normal" font-family="Liberation Sans" transform="rotate(-40 224 388)">T</text><circle cx="210.5" cy="420.5" r="3.8" fill="none" stroke="#000" stroke-width="1"/><line x1="153.3" y1="421.5" x2="240.8" y2="421.5" stroke="#000" stroke-width="1" /><path d="M181.7 421.5 L181.7 431.5 L240.8 431.5" fill="none" stroke="#000" stroke-width="1" stroke-linejoin="miter"/><text x="236.3" y="438.5" font-size="11.5" fill="#000" text-anchor="middle" dominant-baseline="central" letter-spacing="-0.3" font-weight="normal" font-family="Liberation Sans">LF</text><line x1="255.8" y1="449.5" x2="211" y2="449.5" stroke="#000" stroke-width="1" /><path d="M211 449.5 L217.00 447.30 L217.00 451.70 Z" fill="#000"/><line x1="255" y1="373.7" x2="279" y2="373.7" stroke="#000" stroke-width="1" /><path d="M272 369.5 L280 373.7 L272 378" fill="none" stroke="#000" stroke-width="1" stroke-linejoin="miter"/><text x="371.8" y="295" font-size="11.5" fill="#000" text-anchor="middle" dominant-baseline="central" letter-spacing="-0.3" font-weight="normal" font-family="Liberation Sans">W1</text><line x1="329" y1="302.4" x2="412" y2="310.3" stroke="#000" stroke-width="1" /><path d="M412 310.3 L405.82 311.92 L406.24 307.54 Z" fill="#000"/><path d="M329 302.4 L335.18 300.78 L334.76 305.16 Z" fill="#000"/><line x1="329" y1="297.6" x2="329" y2="342.6" stroke="#000" stroke-width="1" /><line x1="412.5" y1="306" x2="412.5" y2="351" stroke="#000" stroke-width="1" /><text x="371.2" y="316.5" font-size="11.5" fill="#000" text-anchor="middle" dominant-baseline="central" letter-spacing="-0.3" font-weight="normal" font-family="Liberation Sans">UF1</text><line x1="338.9" y1="324.4" x2="402.7" y2="330.6" stroke="#000" stroke-width="1" /><path d="M402.7 330.6 L396.52 332.21 L396.94 327.83 Z" fill="#000"/><path d="M338.9 324.4 L345.08 322.79 L344.66 327.17 Z" fill="#000"/><line x1="338.9" y1="320" x2="338.9" y2="344" stroke="#000" stroke-width="1" /><line x1="402.7" y1="324.4" x2="402.7" y2="351" stroke="#000" stroke-width="1" /><path d="M328.5 341.2 L413.4 348.3 L413.4 351.6 L328.5 344.5 L328.5 341.2" fill="none" stroke="#000" stroke-width="1" stroke-linejoin="miter"/><line x1="301" y1="340.5" x2="328.5" y2="340.5" stroke="#000" stroke-width="1" /><line x1="413.4" y1="348.5" x2="443" y2="348.5" stroke="#000" stroke-width="1" /><line x1="335.5" y1="344" x2="335.5" y2="420" stroke="#000" stroke-width="1" /><line x1="338.5" y1="344" x2="338.5" y2="420" stroke="#000" stroke-width="1" /><line x1="402.5" y1="351" x2="402.5" y2="420" stroke="#000" stroke-width="1" /><line x1="405.5" y1="351" x2="405.5" y2="420" stroke="#000" stroke-width="1" /><line x1="338.9" y1="344.5" x2="402.7" y2="420" stroke="#000" stroke-width="1" /><line x1="402.7" y1="351.5" x2="338.9" y2="420" stroke="#000" stroke-width="1" /><text x="366" y="361" font-size="10.5" fill="#000" text-anchor="middle" dominant-baseline="central" letter-spacing="-0.3" font-weight="normal" font-family="Liberation Sans" transform="rotate(55 366 361)">T1</text><text x="355" y="387.6" font-size="10.5" fill="#000" text-anchor="middle" dominant-baseline="central" letter-spacing="-0.3" font-weight="normal" font-family="Liberation Sans" transform="rotate(-55 355 387.6)">T2</text><line x1="328.5" y1="420.5" x2="413.4" y2="420.5" stroke="#000" stroke-width="1" /><line x1="328.5" y1="423" x2="413.4" y2="423" stroke="#000" stroke-width="1" /><line x1="328.5" y1="420.5" x2="328.5" y2="423" stroke="#000" stroke-width="1" /><line x1="413.4" y1="420.5" x2="413.4" y2="423" stroke="#000" stroke-width="1" /><line x1="308" y1="380" x2="308" y2="341" stroke="#000" stroke-width="1" /><path d="M308 341 L310.20 347.00 L305.80 347.00 Z" fill="#000"/><line x1="308" y1="380" x2="308" y2="420" stroke="#000" stroke-width="1" /><path d="M308 420 L305.80 414.00 L310.20 414.00 Z" fill="#000"/><text x="295.3" y="381" font-size="11.5" fill="#000" text-anchor="middle" dominant-baseline="central" letter-spacing="-0.3" font-weight="normal" font-family="Liberation Sans">H1</text><line x1="301" y1="420.5" x2="338" y2="420.5" stroke="#000" stroke-width="1" /><line x1="437.3" y1="384" x2="437.3" y2="349" stroke="#000" stroke-width="1" /><path d="M437.3 349 L439.50 355.00 L435.10 355.00 Z" fill="#000"/><line x1="437.3" y1="384" x2="437.3" y2="420" stroke="#000" stroke-width="1" /><path d="M437.3 420 L435.10 414.00 L439.50 414.00 Z" fill="#000"/><text x="453.3" y="382" font-size="11.5" fill="#000" text-anchor="middle" dominant-baseline="central" letter-spacing="-0.3" font-weight="normal" font-family="Liberation Sans">H2</text><line x1="405" y1="420.5" x2="445.7" y2="420.5" stroke="#000" stroke-width="1" /><line x1="328.5" y1="423" x2="328.5" y2="474.8" stroke="#000" stroke-width="1" /><line x1="413.4" y1="423" x2="413.4" y2="474.8" stroke="#000" stroke-width="1" /><line x1="338.9" y1="423" x2="338.9" y2="453.7" stroke="#000" stroke-width="1" /><line x1="402.7" y1="423" x2="402.7" y2="453.7" stroke="#000" stroke-width="1" /><text x="371.2" y="435.5" font-size="11.5" fill="#000" text-anchor="middle" dominant-baseline="central" letter-spacing="-0.3" font-weight="normal" font-family="Liberation Sans">LF1</text><line x1="370" y1="449.5" x2="339.5" y2="449.5" stroke="#000" stroke-width="1" /><path d="M339.5 449.5 L345.50 447.30 L345.50 451.70 Z" fill="#000"/><line x1="370" y1="449.5" x2="402" y2="449.5" stroke="#000" stroke-width="1" /><path d="M402 449.5 L396.00 451.70 L396.00 447.30 Z" fill="#000"/><text x="371.8" y="460.5" font-size="11.5" fill="#000" text-anchor="middle" dominant-baseline="central" letter-spacing="-0.3" font-weight="normal" font-family="Liberation Sans">W2</text><line x1="370" y1="471.5" x2="329" y2="471.5" stroke="#000" stroke-width="1" /><path d="M329 471.5 L335.00 469.30 L335.00 473.70 Z" fill="#000"/><line x1="370" y1="471.5" x2="413" y2="471.5" stroke="#000" stroke-width="1" /><path d="M413 471.5 L407.00 473.70 L407.00 469.30 Z" fill="#000"/><text x="617" y="316.6" font-size="11.5" fill="#000" text-anchor="middle" dominant-baseline="central" letter-spacing="-1.2" font-weight="normal" font-family="Liberation Sans">UL，UR</text><line x1="624" y1="330.5" x2="510.5" y2="330.5" stroke="#000" stroke-width="1" /><path d="M510.5 330.5 L516.50 328.30 L516.50 332.70 Z" fill="#000"/><line x1="624" y1="330.5" x2="737.5" y2="330.5" stroke="#000" stroke-width="1" /><path d="M737.5 330.5 L731.50 332.70 L731.50 328.30 Z" fill="#000"/><line x1="510.5" y1="326" x2="510.5" y2="422" stroke="#000" stroke-width="1" /><line x1="737.5" y1="326" x2="737.5" y2="422" stroke="#000" stroke-width="1" /><line x1="510.5" y1="347.5" x2="737.5" y2="347.5" stroke="#000" stroke-width="1" /><line x1="510.5" y1="350.5" x2="737.5" y2="350.5" stroke="#000" stroke-width="1" /><line x1="510.5" y1="418.5" x2="737.5" y2="418.5" stroke="#000" stroke-width="1" /><line x1="510.5" y1="421.5" x2="737.5" y2="421.5" stroke="#000" stroke-width="1" /><line x1="509.5" y1="421.5" x2="509.5" y2="442.5" stroke="#000" stroke-width="1" /><line x1="738.5" y1="421.5" x2="738.5" y2="442.5" stroke="#000" stroke-width="1" /><line x1="624" y1="437.5" x2="510" y2="437.5" stroke="#000" stroke-width="1" /><path d="M510 437.5 L516.00 435.30 L516.00 439.70 Z" fill="#000"/><line x1="624" y1="437.5" x2="738" y2="437.5" stroke="#000" stroke-width="1" /><path d="M738 437.5 L732.00 439.70 L732.00 435.30 Z" fill="#000"/><text x="617" y="451" font-size="11.5" fill="#000" text-anchor="middle" dominant-baseline="central" letter-spacing="-1.2" font-weight="normal" font-family="Liberation Sans">LL，LR</text><text x="610" y="361" font-size="10" fill="#000" text-anchor="middle" dominant-baseline="central" letter-spacing="-0.3" font-weight="normal" font-family="Liberation Sans">U</text><line x1="612.5" y1="405.5" x2="612.5" y2="374" stroke="#000" stroke-width="1" /><path d="M612.5 374 L614.70 380.00 L610.30 380.00 Z" fill="#000"/><line x1="612.5" y1="405.5" x2="648" y2="405.5" stroke="#000" stroke-width="1" /><path d="M648 405.5 L642.00 407.70 L642.00 403.30 Z" fill="#000"/><text x="658" y="404" font-size="10" fill="#000" text-anchor="middle" dominant-baseline="central" letter-spacing="-0.3" font-weight="normal" font-family="Liberation Sans">X</text><text x="878.8" y="293" font-size="11.5" fill="#000" text-anchor="middle" dominant-baseline="central" letter-spacing="-0.3" font-weight="normal" font-family="Liberation Sans">W3</text><line x1="836" y1="306.2" x2="921" y2="300" stroke="#000" stroke-width="1" /><path d="M921 300 L915.18 302.63 L914.86 298.24 Z" fill="#000"/><path d="M836 306.2 L841.82 303.57 L842.14 307.96 Z" fill="#000"/><line x1="836" y1="302.5" x2="836" y2="349" stroke="#000" stroke-width="1" /><line x1="921" y1="296" x2="921" y2="341.6" stroke="#000" stroke-width="1" /><text x="879.4" y="315.6" font-size="11.5" fill="#000" text-anchor="middle" dominant-baseline="central" letter-spacing="-0.3" font-weight="normal" font-family="Liberation Sans">UF2</text><line x1="846.9" y1="330.6" x2="910.6" y2="325" stroke="#000" stroke-width="1" /><path d="M910.6 325 L904.82 327.72 L904.43 323.33 Z" fill="#000"/><path d="M846.9 330.6 L852.68 327.88 L853.07 332.27 Z" fill="#000"/><line x1="846.9" y1="324" x2="846.9" y2="350" stroke="#000" stroke-width="1" /><line x1="910.6" y1="321.9" x2="910.6" y2="342" stroke="#000" stroke-width="1" /><path d="M836 349.4 L921 340.6 L921 343.6 L836 352.4 L836 349.4" fill="none" stroke="#000" stroke-width="1" stroke-linejoin="miter"/><line x1="807.5" y1="347.8" x2="836" y2="347.8" stroke="#000" stroke-width="1" /><line x1="921" y1="340.6" x2="947.5" y2="340.6" stroke="#000" stroke-width="1" /><line x1="843.5" y1="350" x2="843.5" y2="420" stroke="#000" stroke-width="1" /><line x1="846.5" y1="350" x2="846.5" y2="420" stroke="#000" stroke-width="1" /><line x1="910.5" y1="342" x2="910.5" y2="420" stroke="#000" stroke-width="1" /><line x1="913.5" y1="342" x2="913.5" y2="420" stroke="#000" stroke-width="1" /><line x1="846.9" y1="350.5" x2="910.6" y2="420" stroke="#000" stroke-width="1" /><line x1="910.6" y1="343" x2="846.9" y2="420" stroke="#000" stroke-width="1" /><text x="872" y="361" font-size="10.5" fill="#000" text-anchor="middle" dominant-baseline="central" letter-spacing="-0.3" font-weight="normal" font-family="Liberation Sans" transform="rotate(55 872 361)">T3</text><text x="863" y="387" font-size="10.5" fill="#000" text-anchor="middle" dominant-baseline="central" letter-spacing="-0.3" font-weight="normal" font-family="Liberation Sans" transform="rotate(-55 863 387)">T4</text><line x1="836" y1="419.5" x2="921" y2="419.5" stroke="#000" stroke-width="1" /><line x1="836" y1="422" x2="921" y2="422" stroke="#000" stroke-width="1" /><line x1="836" y1="419.5" x2="836" y2="422" stroke="#000" stroke-width="1" /><line x1="921" y1="419.5" x2="921" y2="422" stroke="#000" stroke-width="1" /><line x1="815.5" y1="383" x2="815.5" y2="348.5" stroke="#000" stroke-width="1" /><path d="M815.5 348.5 L817.70 354.50 L813.30 354.50 Z" fill="#000"/><line x1="815.5" y1="383" x2="815.5" y2="419" stroke="#000" stroke-width="1" /><path d="M815.5 419 L813.30 413.00 L817.70 413.00 Z" fill="#000"/><text x="800.6" y="380.6" font-size="11.5" fill="#000" text-anchor="middle" dominant-baseline="central" letter-spacing="-0.3" font-weight="normal" font-family="Liberation Sans">H3</text><line x1="943.75" y1="380" x2="943.75" y2="341.5" stroke="#000" stroke-width="1" /><path d="M943.75 341.5 L945.95 347.50 L941.55 347.50 Z" fill="#000"/><line x1="943.75" y1="380" x2="943.75" y2="419" stroke="#000" stroke-width="1" /><path d="M943.75 419 L941.55 413.00 L945.95 413.00 Z" fill="#000"/><text x="955.3" y="382" font-size="11.5" fill="#000" text-anchor="middle" dominant-baseline="central" letter-spacing="-0.3" font-weight="normal" font-family="Liberation Sans">H4</text><line x1="807.5" y1="419.5" x2="846" y2="419.5" stroke="#000" stroke-width="1" /><line x1="913" y1="419.5" x2="947.5" y2="419.5" stroke="#000" stroke-width="1" /><line x1="836" y1="422" x2="836" y2="472.8" stroke="#000" stroke-width="1" /><line x1="921" y1="422" x2="921" y2="472.8" stroke="#000" stroke-width="1" /><line x1="846.9" y1="422" x2="846.9" y2="453" stroke="#000" stroke-width="1" /><line x1="910.6" y1="422" x2="910.6" y2="453" stroke="#000" stroke-width="1" /><text x="879.4" y="437" font-size="11.5" fill="#000" text-anchor="middle" dominant-baseline="central" letter-spacing="-0.3" font-weight="normal" font-family="Liberation Sans">LF2</text><line x1="879" y1="449.5" x2="847.5" y2="449.5" stroke="#000" stroke-width="1" /><path d="M847.5 449.5 L853.50 447.30 L853.50 451.70 Z" fill="#000"/><line x1="879" y1="449.5" x2="910" y2="449.5" stroke="#000" stroke-width="1" /><path d="M910 449.5 L904.00 451.70 L904.00 447.30 Z" fill="#000"/><text x="879.4" y="458.8" font-size="11.5" fill="#000" text-anchor="middle" dominant-baseline="central" letter-spacing="-0.3" font-weight="normal" font-family="Liberation Sans">W4</text><line x1="879" y1="470.5" x2="836.5" y2="470.5" stroke="#000" stroke-width="1" /><path d="M836.5 470.5 L842.50 468.30 L842.50 472.70 Z" fill="#000"/><line x1="879" y1="470.5" x2="920.5" y2="470.5" stroke="#000" stroke-width="1" /><path d="M920.5 470.5 L914.50 472.70 L914.50 468.30 Z" fill="#000"/><text x="281.2" y="457" font-size="7.5" fill="#000" text-anchor="middle" dominant-baseline="central" letter-spacing="-0.3" font-weight="normal" font-family="Liberation Sans">U</text><line x1="282.5" y1="483.5" x2="282.5" y2="465.5" stroke="#000" stroke-width="1" /><path d="M282.5 465.5 L284.50 470.50 L280.50 470.50 Z" fill="#000"/><line x1="282.5" y1="483.5" x2="264" y2="483.5" stroke="#000" stroke-width="1" /><path d="M264 483.5 L269.00 481.50 L269.00 485.50 Z" fill="#000"/><text x="255.3" y="484" font-size="7.5" fill="#000" text-anchor="middle" dominant-baseline="central" letter-spacing="-0.3" font-weight="normal" font-family="Liberation Sans">Y</text><text x="968" y="454.6" font-size="7.5" fill="#000" text-anchor="middle" dominant-baseline="central" letter-spacing="-0.3" font-weight="normal" font-family="Liberation Sans">U</text><line x1="969.5" y1="483.5" x2="969.5" y2="462" stroke="#000" stroke-width="1" /><path d="M969.5 462 L971.50 467.00 L967.50 467.00 Z" fill="#000"/><line x1="969.5" y1="483.5" x2="993" y2="483.5" stroke="#000" stroke-width="1" /><path d="M993 483.5 L988.00 485.50 L988.00 481.50 Z" fill="#000"/><text x="1003" y="483" font-size="7.5" fill="#000" text-anchor="middle" dominant-baseline="central" letter-spacing="-0.3" font-weight="normal" font-family="Liberation Sans">Y</text><text x="371.2" y="493" font-size="11.5" fill="#000" text-anchor="middle" dominant-baseline="central" letter-spacing="-0.3" font-weight="normal" font-family="Liberation Sans">δ3</text><circle cx="362.8" cy="507" r="6" fill="none" stroke="#000" stroke-width="0.8" stroke-dasharray="2 1.5"/><path d="M329 504.1 L413.4 513.7 L413.4 516.5 L329 507 L329 504.1" fill="none" stroke="#000" stroke-width="1" stroke-linejoin="miter"/><line x1="336" y1="507.5" x2="336" y2="583.5" stroke="#000" stroke-width="1" /><line x1="339" y1="507.5" x2="339" y2="583.5" stroke="#000" stroke-width="1" /><line x1="402.7" y1="514.5" x2="402.7" y2="583.5" stroke="#000" stroke-width="1" /><line x1="405.5" y1="514.5" x2="405.5" y2="583.5" stroke="#000" stroke-width="1" /><line x1="328.5" y1="583.5" x2="413.4" y2="583.5" stroke="#000" stroke-width="1" /><line x1="328.5" y1="586" x2="413.4" y2="586" stroke="#000" stroke-width="1" /><line x1="328.5" y1="583.5" x2="328.5" y2="586" stroke="#000" stroke-width="1" /><line x1="413.4" y1="583.5" x2="413.4" y2="586" stroke="#000" stroke-width="1" /><path d="M352.4 509.6 L352.4 521.6 L356 521.6 L356 509.6" fill="none" stroke="#000" stroke-width="0.9" stroke-linejoin="miter"/><path d="M369.8 511.5 L369.8 523.5 L373.5 523.5 L373.5 511.5" fill="none" stroke="#000" stroke-width="0.9" stroke-linejoin="miter"/><path d="M386.7 512.4 L386.7 524.4 L390.3 524.4 L390.3 512.4" fill="none" stroke="#000" stroke-width="0.9" stroke-linejoin="miter"/><path d="M370.6 583.5 L370.6 571.3 L373.5 571.3 L373.5 583.5" fill="none" stroke="#000" stroke-width="0.9" stroke-linejoin="miter"/><ellipse cx="337" cy="545.5" rx="14" ry="38" fill="none" stroke="#000" stroke-width="0.8" stroke-dasharray="2 1.5"/><ellipse cx="405" cy="549" rx="14" ry="38" fill="none" stroke="#000" stroke-width="0.8" stroke-dasharray="2 1.5"/><ellipse cx="354" cy="584" rx="17" ry="8.5" fill="none" stroke="#000" stroke-width="0.8" stroke-dasharray="2 1.5"/><text x="438.7" y="505.2" font-size="11.5" fill="#000" text-anchor="middle" dominant-baseline="central" letter-spacing="-0.3" font-weight="normal" font-family="Liberation Sans">δ2</text><line x1="454" y1="521.6" x2="425" y2="521.6" stroke="#000" stroke-width="1" /><path d="M425 521.6 L431.00 519.40 L431.00 523.80 Z" fill="#000"/><line x1="427.4" y1="514.5" x2="403.5" y2="548.3" stroke="#000" stroke-width="1" /><line x1="413.4" y1="515.4" x2="389.5" y2="549.7" stroke="#000" stroke-width="1" /><line x1="395" y1="521.6" x2="412" y2="521.6" stroke="#000" stroke-width="1" /><path d="M412 521.6 L408.00 523.40 L408.00 519.80 Z" fill="#000"/><text x="441.5" y="535.6" font-size="9" fill="#555" text-anchor="middle" dominant-baseline="central" letter-spacing="-0.3" font-weight="normal" font-family="Liberation Sans">(-)</text><text x="298" y="554" font-size="9" fill="#555" text-anchor="middle" dominant-baseline="central" letter-spacing="-0.3" font-weight="normal" font-family="Liberation Sans">(+)</text><line x1="275.6" y1="566.5" x2="305" y2="566.5" stroke="#000" stroke-width="1" /><path d="M305 566.5 L299.00 568.70 L299.00 564.30 Z" fill="#000"/><line x1="305" y1="568" x2="322.8" y2="544" stroke="#000" stroke-width="1" /><line x1="317.8" y1="569.4" x2="336" y2="542.6" stroke="#000" stroke-width="1" /><line x1="335" y1="566.5" x2="319" y2="566.5" stroke="#000" stroke-width="1" /><path d="M319 566.5 L323.00 564.70 L323.00 568.30 Z" fill="#000"/><text x="296.7" y="582" font-size="11.5" fill="#000" text-anchor="middle" dominant-baseline="central" letter-spacing="-0.3" font-weight="normal" font-family="Liberation Sans">δ1</text><text x="361.4" y="564.6" font-size="11.5" fill="#000" text-anchor="middle" dominant-baseline="central" letter-spacing="-0.3" font-weight="normal" font-family="Liberation Sans">δ4</text><text x="873.8" y="494.8" font-size="11.5" fill="#000" text-anchor="middle" dominant-baseline="central" letter-spacing="-0.3" font-weight="normal" font-family="Liberation Sans">δ7</text><circle cx="870" cy="510.3" r="6" fill="none" stroke="#000" stroke-width="0.8" stroke-dasharray="2 1.5"/><path d="M835.5 513.7 L920.7 506 L920.7 508.8 L835.5 516.5 L835.5 513.7" fill="none" stroke="#000" stroke-width="1" stroke-linejoin="miter"/><line x1="844.5" y1="515" x2="844.5" y2="583.5" stroke="#000" stroke-width="1" /><line x1="847.5" y1="515" x2="847.5" y2="583.5" stroke="#000" stroke-width="1" /><line x1="911.5" y1="507.5" x2="911.5" y2="583.5" stroke="#000" stroke-width="1" /><line x1="914.5" y1="507.5" x2="914.5" y2="583.5" stroke="#000" stroke-width="1" /><line x1="835.5" y1="583.5" x2="920.7" y2="583.5" stroke="#000" stroke-width="1" /><line x1="835.5" y1="586" x2="920.7" y2="586" stroke="#000" stroke-width="1" /><line x1="835.5" y1="583.5" x2="835.5" y2="586" stroke="#000" stroke-width="1" /><line x1="920.7" y1="583.5" x2="920.7" y2="586" stroke="#000" stroke-width="1" /><path d="M860 512 L860 523 L863.5 523 L863.5 512" fill="none" stroke="#000" stroke-width="0.9" stroke-linejoin="miter"/><path d="M876.8 510.79999999999995 L876.8 521.8 L880.3 521.8 L880.3 510.79999999999995" fill="none" stroke="#000" stroke-width="0.9" stroke-linejoin="miter"/><path d="M893.7 509.70000000000005 L893.7 520.7 L897.2 520.7 L897.2 509.70000000000005" fill="none" stroke="#000" stroke-width="0.9" stroke-linejoin="miter"/><path d="M877 583.5 L877 571.3 L880 571.3 L880 583.5" fill="none" stroke="#000" stroke-width="0.9" stroke-linejoin="miter"/><ellipse cx="845.6" cy="549.7" rx="14" ry="38" fill="none" stroke="#000" stroke-width="0.8" stroke-dasharray="2 1.5"/><ellipse cx="912.3" cy="547.4" rx="14" ry="38" fill="none" stroke="#000" stroke-width="0.8" stroke-dasharray="2 1.5"/><ellipse cx="862.5" cy="585" rx="17" ry="8.5" fill="none" stroke="#000" stroke-width="0.8" stroke-dasharray="2 1.5"/><text x="946.9" y="500.5" font-size="11.5" fill="#000" text-anchor="middle" dominant-baseline="central" letter-spacing="-0.3" font-weight="normal" font-family="Liberation Sans">δ6</text><line x1="963.8" y1="515.4" x2="934" y2="515.4" stroke="#000" stroke-width="1" /><path d="M934 515.4 L940.00 513.20 L940.00 517.60 Z" fill="#000"/><line x1="935.6" y1="513.7" x2="910.9" y2="545.5" stroke="#000" stroke-width="1" /><line x1="920.7" y1="513.1" x2="898.2" y2="545.5" stroke="#000" stroke-width="1" /><line x1="902.5" y1="515.4" x2="919.3" y2="515.4" stroke="#000" stroke-width="1" /><path d="M919.3 515.4 L915.30 517.20 L915.30 513.60 Z" fill="#000"/><text x="949.4" y="530.5" font-size="9" fill="#555" text-anchor="middle" dominant-baseline="central" letter-spacing="-0.3" font-weight="normal" font-family="Liberation Sans">(-)</text><text x="805.4" y="554" font-size="9" fill="#555" text-anchor="middle" dominant-baseline="central" letter-spacing="-0.3" font-weight="normal" font-family="Liberation Sans">(+)</text><line x1="783" y1="568" x2="813.9" y2="568" stroke="#000" stroke-width="1" /><path d="M813.9 568 L807.90 570.20 L807.90 565.80 Z" fill="#000"/><line x1="813.9" y1="570.8" x2="830.7" y2="548.3" stroke="#000" stroke-width="1" /><line x1="826.5" y1="570.8" x2="843.4" y2="546.9" stroke="#000" stroke-width="1" /><line x1="842" y1="568" x2="828" y2="568" stroke="#000" stroke-width="1" /><path d="M828 568 L832.00 566.20 L832.00 569.80 Z" fill="#000"/><text x="804.6" y="578.6" font-size="11.5" fill="#000" text-anchor="middle" dominant-baseline="central" letter-spacing="-0.3" font-weight="normal" font-family="Liberation Sans">δ5</text><text x="869.3" y="563.7" font-size="11.5" fill="#000" text-anchor="middle" dominant-baseline="central" letter-spacing="-0.3" font-weight="normal" font-family="Liberation Sans">δ8</text></svg>
<div class="t" style="left:486.2px;top:414px;font-size:11.5px;color:#000;transform:translate(-50%,-50%);letter-spacing:-0.891px;">反X側</div>
<div class="t" style="left:755.8px;top:414px;font-size:11.5px;color:#000;transform:translate(-50%,-50%);letter-spacing:-0.836px;">X側</div>
<div class="t" style="left:539px;top:476px;font-size:10.5px;color:#000;transform:translate(0,-50%);letter-spacing:-1.325px;">※UL,UR,LL,LRはフランジコバ面を計測する。</div>
<div class="t" style="left:40.8px;top:459px;font-size:10.5px;color:#000;transform:translate(0,-50%);letter-spacing:-2.0px;">・部材長</div>
<div class="t" style="left:47.2px;top:476px;font-size:10.5px;color:#000;transform:translate(0,-50%);letter-spacing:-0.053px;">L≦10m</div>
<div class="t" style="left:131.6px;top:476px;font-size:10.5px;color:#000;transform:translate(0,-50%);letter-spacing:-0.527px;">±3mm</div>
<div class="t" style="left:40.8px;top:493px;font-size:10.5px;color:#000;transform:translate(0,-50%);letter-spacing:-2.0px;">・断面寸法</div>
<div class="t" style="left:40.8px;top:509.7px;font-size:10.5px;color:#000;transform:translate(0,-50%);letter-spacing:-1.332px;">（W:フランジ幅、H:部材高、F:腹板間隔、T:断面対角）</div>
<div class="t" style="left:47.2px;top:526.6px;font-size:10.5px;color:#000;transform:translate(0,-50%);letter-spacing:-0.123px;">1.0＜W≦2.0</div>
<div class="t" style="left:138.6px;top:526.6px;font-size:10.5px;color:#000;transform:translate(0,-50%);letter-spacing:0.695px;">±4</div>
<div class="t" style="left:47.2px;top:543.5px;font-size:10.5px;color:#000;transform:translate(0,-50%);letter-spacing:-0.703px;">2.0＜W</div>
<div class="t" style="left:120.4px;top:543.5px;font-size:10.5px;color:#000;transform:translate(0,-50%);letter-spacing:0.074px;">±(3+W/2)</div>
<div class="t" style="left:40.8px;top:560.4px;font-size:10.5px;color:#000;transform:translate(0,-50%);letter-spacing:-1.833px;">・腹板平面度</div>
<div class="t" style="left:145.7px;top:560.4px;font-size:10.5px;color:#000;transform:translate(0,-50%);letter-spacing:-0.206px;">H/250</div>
<div class="t" style="left:40.8px;top:577.2px;font-size:10.5px;color:#000;transform:translate(0,-50%);letter-spacing:-2.375px;">・フランジ平面度</div>
<div class="t" style="left:145.7px;top:577.2px;font-size:10.5px;color:#000;transform:translate(0,-50%);letter-spacing:-0.172px;">F/150</div>
<div class="t" style="left:40.8px;top:594.1px;font-size:10.5px;color:#000;transform:translate(0,-50%);letter-spacing:-2.375px;">・フランジ直角度</div>
<div class="t" style="left:145.7px;top:594.1px;font-size:10.5px;color:#000;transform:translate(0,-50%);letter-spacing:-0.188px;">2b/200</div>
<div class="t" style="left:539px;top:544.6px;font-size:10px;color:#000;transform:translate(0,-50%);letter-spacing:-1.644px;">※社内目標値は80%とする。</div>
<div class="t" style="left:545.3px;top:561.5px;font-size:10px;color:#000;transform:translate(0,-50%);letter-spacing:-1.78px;">ただし部材長は他社との規格値振り分けにより±1とする。</div>
<div class="t" style="left:545.3px;top:578.4px;font-size:10px;color:#000;transform:translate(0,-50%);letter-spacing:-1.592px;">また部材高および腹板の平面度は50%とする。</div>
<div class="t" style="left:539px;top:612.1px;font-size:10px;color:#000;transform:translate(0,-50%);letter-spacing:-1.396px;">※δ3、δ4は全箇所計測し、最も誤差が大きいものを入力とする。</div>
</body></html>
